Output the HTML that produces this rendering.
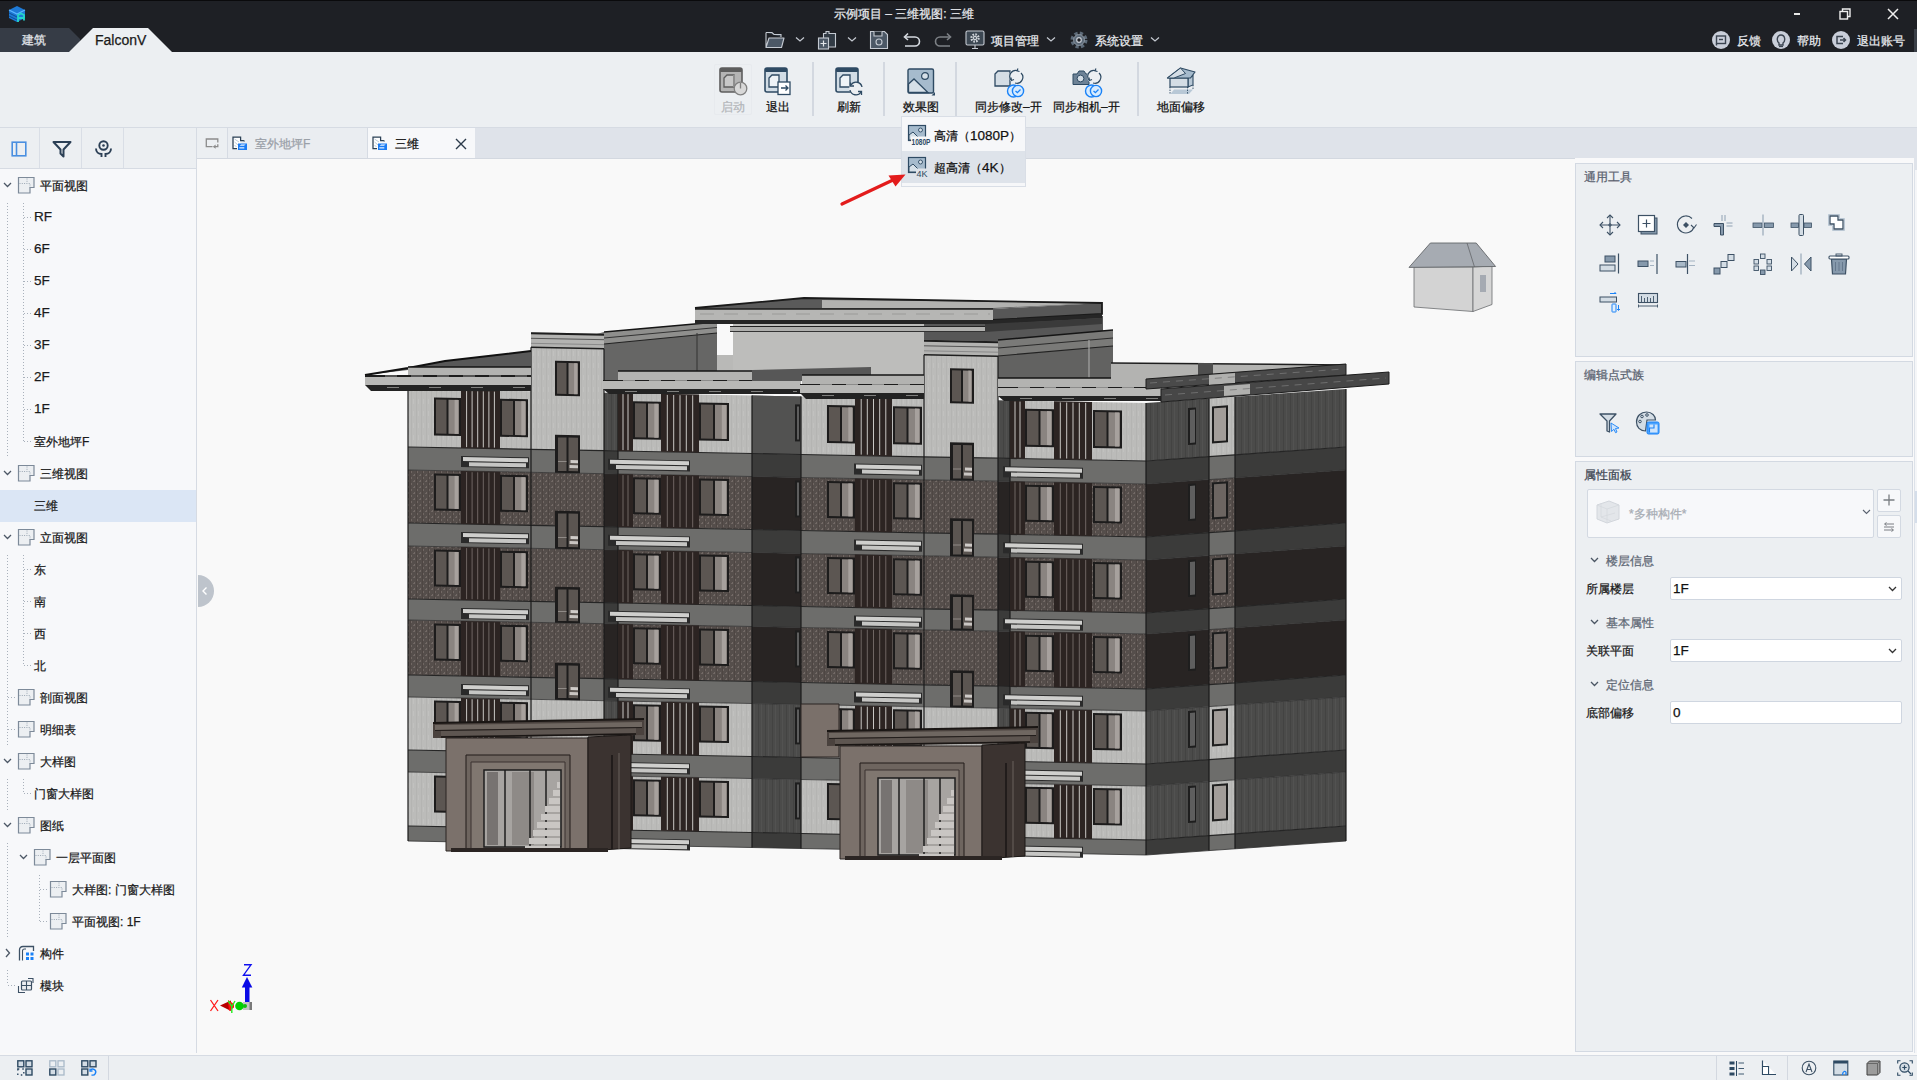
<!DOCTYPE html>
<html><head><meta charset="utf-8">
<style>
*{box-sizing:border-box;margin:0;padding:0}
html,body{width:1917px;height:1080px;overflow:hidden;background:#f9f9f9;font-family:"Liberation Sans",sans-serif;color:#1a1a1a}
.a{position:absolute}
.t{position:absolute;white-space:nowrap;line-height:1;-webkit-text-stroke-width:0.25px}
svg{position:absolute;overflow:visible}
</style></head><body>
<!-- title bar -->
<div class="a" style="left:0;top:0;width:1917px;height:52px;background:#1e2025"></div>
<div class="a" style="left:0;top:0;width:1917px;height:1px;background:#0a0a0c"></div>
<div class="t" style="left:834px;top:8px;font-size:12px;color:#e6e8ec">示例项目 – 三维视图: 三维</div>
<!-- logo -->
<svg style="left:8px;top:5px" width="18" height="18" viewBox="0 0 18 18">
<path d="M1 5 L9 1 L17 5 L17 13 L9 17 L1 13Z" fill="#1e7ad6"/>
<path d="M1 5 L9 9 L17 5" stroke="#5cb6ff" stroke-width="1.3" fill="none"/>
<path d="M1 8 L9 12 M1 11 L9 15" stroke="#0d4f96" stroke-width="1" fill="none"/>
<path d="M10 17 V10 L13 8.5 L16 10 V15.5 M10 13 H16" stroke="#24d6c8" stroke-width="1.8" fill="none"/>
</svg>
<!-- app tabs -->
<svg style="left:0;top:28px" width="180" height="24" viewBox="0 0 180 24">
<path d="M0 0 H69 L80 11 L80 24 H0Z" fill="#363c46"/>
<path d="M69 24 L93 0 H148 L172 24Z" fill="#eceff2"/>
</svg>
<div class="t" style="left:22px;top:33.5px;font-size:12px;color:#e0e3e8">建筑</div>
<div class="t" style="left:95px;top:33px;font-size:14px;color:#1a1a1a">FalconV</div>
<!-- title row 2 icons -->
<svg style="left:765px;top:31px" width="20" height="18" viewBox="0 0 20 18">
<path d="M1 1.5 H7 L9 3.5 H16 V6" fill="#3a434e" stroke="#c5cad2" stroke-width="1.1"/>
<path d="M1 1.5 V16.5 H16.5 L19 7 H4 L1 16.5" fill="#4c5866" stroke="#c5cad2" stroke-width="1.1" stroke-linejoin="round"/>
</svg>
<svg style="left:795px;top:36px" width="10" height="7" viewBox="0 0 10 7"><path d="M1 1.5 L5 5 L9 1.5" stroke="#c5cad2" stroke-width="1.2" fill="none"/></svg>
<svg style="left:818px;top:30px" width="20" height="20" viewBox="0 0 20 20">
<path d="M5.5 3.5 H8 V1.5 H11 V3.5 H17.5 V17 H5.5Z" fill="#323b45" stroke="#c5cad2" stroke-width="1.1"/>
<rect x="0.5" y="8" width="10" height="11" fill="#4c5866" stroke="#c5cad2" stroke-width="1.1"/>
<path d="M5.5 10.5 V16.5 M2.5 13.5 H8.5" stroke="#e3e6ea" stroke-width="1.2"/>
</svg>
<svg style="left:847px;top:36px" width="10" height="7" viewBox="0 0 10 7"><path d="M1 1.5 L5 5 L9 1.5" stroke="#c5cad2" stroke-width="1.2" fill="none"/></svg>
<svg style="left:869px;top:30px" width="20" height="20" viewBox="0 0 20 20">
<path d="M1.5 1.5 H15.5 L18.5 4.5 V18.5 H1.5Z" fill="#4c5866" stroke="#c5cad2" stroke-width="1.1"/>
<path d="M5 1.5 V6 H13 V1.5" fill="#2a323b" stroke="#c5cad2" stroke-width="1.1"/>
<circle cx="10" cy="12" r="3" fill="none" stroke="#c5cad2" stroke-width="1.1"/>
</svg>
<svg style="left:902px;top:32px" width="20" height="16" viewBox="0 0 20 16">
<path d="M3 5 H13 A4.5 4.5 0 0 1 13 14 H3" fill="none" stroke="#d5d9df" stroke-width="1.6"/>
<path d="M6 1.5 L2.5 5 L6 8" fill="none" stroke="#d5d9df" stroke-width="1.6"/>
</svg>
<svg style="left:933px;top:32px" width="20" height="16" viewBox="0 0 20 16">
<path d="M17 5 H7 A4.5 4.5 0 0 0 7 14 H17" fill="none" stroke="#7d8186" stroke-width="1.6"/>
<path d="M14 1.5 L17.5 5 L14 8" fill="none" stroke="#7d8186" stroke-width="1.6"/>
</svg>
<svg style="left:965px;top:30px" width="20" height="20" viewBox="0 0 20 20">
<rect x="1" y="1" width="18" height="14" rx="1.5" fill="#3d4853" stroke="#c5cad2" stroke-width="1.1"/>
<path d="M7 18.5 H13 M10 15 V18.5" stroke="#c5cad2" stroke-width="1.1"/>
<circle cx="10" cy="8" r="3.6" fill="none" stroke="#cfd3d9" stroke-width="2.2" stroke-dasharray="1.6 1.2"/>
<circle cx="10" cy="8" r="2.2" fill="#cfd3d9"/><circle cx="10" cy="8" r="1" fill="#3d4853"/>
</svg>
<div class="t" style="left:991px;top:34.5px;font-size:12px;color:#e8eaee">项目管理</div>
<svg style="left:1046px;top:36px" width="10" height="7" viewBox="0 0 10 7"><path d="M1 1.5 L5 5 L9 1.5" stroke="#c5cad2" stroke-width="1.2" fill="none"/></svg>
<svg style="left:1069px;top:30px" width="20" height="20" viewBox="0 0 20 20">
<circle cx="10" cy="10" r="6.5" fill="none" stroke="#5d6a78" stroke-width="4" stroke-dasharray="3 2.1"/>
<circle cx="10" cy="10" r="5.5" fill="#5d6a78" stroke="#aab2bc" stroke-width="0.6"/>
<circle cx="10" cy="10" r="2.3" fill="#1e2025" stroke="#c5cad2" stroke-width="1.2"/>
</svg>
<div class="t" style="left:1095px;top:34.5px;font-size:12px;color:#e8eaee">系统设置</div>
<svg style="left:1150px;top:36px" width="10" height="7" viewBox="0 0 10 7"><path d="M1 1.5 L5 5 L9 1.5" stroke="#c5cad2" stroke-width="1.2" fill="none"/></svg>
<!-- window controls -->
<div class="a" style="left:1794px;top:13px;width:6px;height:2px;background:#e8e8e8"></div>
<svg style="left:1839px;top:8px" width="12" height="12" viewBox="0 0 12 12">
<rect x="1" y="3.5" width="7.5" height="7.5" fill="none" stroke="#eee" stroke-width="1.4"/>
<path d="M3.5 3.5 V1 H11 V8.5 H8.5" fill="none" stroke="#eee" stroke-width="1.4"/>
</svg>
<svg style="left:1887px;top:8px" width="12" height="12" viewBox="0 0 12 12"><path d="M1 1 L11 11 M11 1 L1 11" stroke="#eee" stroke-width="1.5"/></svg>
<!-- feedback / help / logout -->
<svg style="left:1712px;top:31px" width="18" height="18" viewBox="0 0 18 18">
<circle cx="9" cy="9" r="9" fill="#c9ced9"/>
<rect x="4.5" y="5" width="9" height="7.5" fill="none" stroke="#3b4450" stroke-width="1.4"/>
<path d="M4.5 12.5 V14.5" stroke="#3b4450" stroke-width="1.4"/><path d="M7 8.5 H11" stroke="#3b4450" stroke-width="1.4"/>
</svg>
<div class="t" style="left:1737px;top:34.5px;font-size:12px;color:#e8eaee">反馈</div>
<svg style="left:1772px;top:31px" width="18" height="18" viewBox="0 0 18 18">
<circle cx="9" cy="9" r="9" fill="#c9ced9"/>
<path d="M7 14 V12 C4.5 10.5 4.5 4 9 4 C13.5 4 13.5 10.5 11 12 V14Z" fill="none" stroke="#3b4450" stroke-width="1.4"/>
<path d="M7 15.5 H11" stroke="#3b4450" stroke-width="1.2"/>
</svg>
<div class="t" style="left:1797px;top:34.5px;font-size:12px;color:#e8eaee">帮助</div>
<svg style="left:1832px;top:31px" width="18" height="18" viewBox="0 0 18 18">
<circle cx="9" cy="9" r="9" fill="#c9ced9"/>
<path d="M11 5.5 H5 V12.5 H11" fill="none" stroke="#3b4450" stroke-width="1.5"/>
<path d="M8 9 H13.5 M11.5 7 L13.5 9 L11.5 11" fill="none" stroke="#3b4450" stroke-width="1.5"/>
</svg>
<div class="t" style="left:1857px;top:34.5px;font-size:12px;color:#e8eaee">退出账号</div>
<div class="a" style="left:1914px;top:29px;width:3px;height:23px;background:#3a3f47"></div>
<!-- toolbar -->
<div class="a" style="left:0;top:52px;width:1917px;height:76px;background:#eceff2"></div>
<div class="a" style="left:0;top:127px;width:1917px;height:1px;background:#d6dbe3"></div>
<!-- 启动 (disabled) -->
<div class="a" style="left:714px;top:64px;width:38px;height:51px;border:1px solid #e7eaee;border-radius:2px"></div>
<svg style="left:719px;top:67px" width="30" height="30" viewBox="0 0 30 30">
<rect x="1" y="1" width="22" height="24" rx="2" fill="#b4b4b4" stroke="#5d5d5d" stroke-width="1.6"/>
<rect x="1" y="1" width="22" height="4" rx="1" fill="#5d5d5d"/>
<path d="M5 11 L8 8 H15 V20 H5Z" fill="#c8c8c8" stroke="#5d5d5d" stroke-width="1.3"/>
<path d="M15 8 V20" stroke="#8f8f8f" stroke-width="2"/>
<circle cx="21.5" cy="21.5" r="6.3" fill="#d8d8d8" stroke="#808080" stroke-width="1.3"/>
<path d="M21.5 16 V21.5" stroke="#808080" stroke-width="1.3"/>
</svg>
<div class="t" style="left:721px;top:100.5px;font-size:12px;color:#b3b6ba">启动</div>
<!-- 退出 -->
<svg style="left:764px;top:67px" width="30" height="30" viewBox="0 0 30 30">
<rect x="1" y="1" width="22" height="24" rx="2" fill="#d2dde6" stroke="#2e4a63" stroke-width="1.6"/>
<rect x="1" y="1" width="22" height="4" rx="1" fill="#2e4a63"/>
<path d="M5 11 L8 8 H15 V20 H5Z" fill="#eef3f7" stroke="#2e4a63" stroke-width="1.3"/>
<rect x="14" y="15" width="12" height="12.5" fill="#fff" stroke="#2e4a63" stroke-width="1.3"/>
<path d="M17 21 H24 M21.5 18.5 L24 21 L21.5 23.5" fill="none" stroke="#2e4a63" stroke-width="1.3"/>
</svg>
<div class="t" style="left:766px;top:100.5px;font-size:12px;color:#111">退出</div>
<div class="a" style="left:812px;top:62px;width:2px;height:54px;background:#d3d8e0"></div>
<!-- 刷新 -->
<svg style="left:835px;top:67px" width="30" height="30" viewBox="0 0 30 30">
<rect x="1" y="1" width="22" height="24" rx="2" fill="#d2dde6" stroke="#2e4a63" stroke-width="1.6"/>
<rect x="1" y="1" width="22" height="4" rx="1" fill="#2e4a63"/>
<path d="M5 11 L8 8 H15 V20 H5Z" fill="#eef3f7" stroke="#2e4a63" stroke-width="1.3"/>
<circle cx="21" cy="21.5" r="6.8" fill="#eceff2"/>
<path d="M16 18 A6 6 0 0 1 27 20 M26 25 A6 6 0 0 1 15 23" fill="none" stroke="#2e4a63" stroke-width="1.3"/>
<path d="M15.5 15.5 V19 H19 M26.5 28 V24.5 H23" fill="none" stroke="#2e4a63" stroke-width="1.3"/>
</svg>
<div class="t" style="left:837px;top:100.5px;font-size:12px;color:#111">刷新</div>
<div class="a" style="left:883px;top:62px;width:2px;height:54px;background:#d3d8e0"></div>
<!-- 效果图 -->
<svg style="left:907px;top:68px" width="30" height="30" viewBox="0 0 30 30">
<rect x="1" y="1" width="25.5" height="24" rx="1.5" fill="#a6bbcd" stroke="#2e4a63" stroke-width="1.4"/>
<path d="M1.5 16 L7 11 L21 24.5 H1.5Z" fill="#d6e0e8" stroke="#2e4a63" stroke-width="1.3"/>
<circle cx="18" cy="8" r="3.4" fill="#d6e0e8" stroke="#2e4a63" stroke-width="1.2"/>
<path d="M28 27.5 V24 L24.5 27.5Z" fill="#2e4a63"/>
</svg>
<div class="t" style="left:903px;top:100.5px;font-size:12px;color:#111">效果图</div>
<div class="a" style="left:955px;top:62px;width:2px;height:54px;background:#d3d8e0"></div>
<!-- 同步修改-开 -->
<svg style="left:994px;top:67px" width="32" height="30" viewBox="0 0 32 30">
<path d="M1 7 L4 4 H16 V19 H1Z" fill="#d4dde5" stroke="#2e4a63" stroke-width="1.3"/>
<circle cx="22" cy="9.5" r="7" fill="#eceff2"/>
<path d="M17 13 A6 6 0 0 1 23 3.5 M27 6 A6 6 0 0 1 21 16" fill="none" stroke="#2e4a63" stroke-width="1.2"/>
<path d="M24 1.5 L23 3.8 L25.5 4.5 M17 10.5 L17.5 13.5 L20 12.5" fill="none" stroke="#2e4a63" stroke-width="1.2"/>
<circle cx="19.5" cy="24" r="6" fill="#d6ebff" stroke="#1a82f7" stroke-width="1.4"/>
<circle cx="24" cy="24" r="5.6" fill="#d6ebff" stroke="#1a82f7" stroke-width="1.4"/>
<path d="M21.5 24 L23.4 25.6 L26.5 22.5" fill="none" stroke="#1a82f7" stroke-width="1.3"/>
</svg>
<div class="t" style="left:975px;top:100.5px;font-size:12px;color:#111">同步修改–开</div>
<!-- 同步相机-开 -->
<svg style="left:1072px;top:67px" width="32" height="30" viewBox="0 0 32 30">
<path d="M1 7 H5 L7 4 H12 L14 7 H17 V17.5 H1Z" fill="#6d8296" stroke="#2e4a63" stroke-width="1"/>
<circle cx="8.5" cy="11.5" r="3.4" fill="#d4dde5" stroke="#2e4a63" stroke-width="1"/>
<circle cx="22" cy="9.5" r="7" fill="#eceff2"/>
<path d="M17 13 A6 6 0 0 1 23 3.5 M27 6 A6 6 0 0 1 21 16" fill="none" stroke="#2e4a63" stroke-width="1.2"/>
<path d="M24 1.5 L23 3.8 L25.5 4.5 M17 10.5 L17.5 13.5 L20 12.5" fill="none" stroke="#2e4a63" stroke-width="1.2"/>
<circle cx="19.5" cy="24" r="6" fill="#d6ebff" stroke="#1a82f7" stroke-width="1.4"/>
<circle cx="24" cy="24" r="5.6" fill="#d6ebff" stroke="#1a82f7" stroke-width="1.4"/>
<path d="M21.5 24 L23.4 25.6 L26.5 22.5" fill="none" stroke="#1a82f7" stroke-width="1.3"/>
</svg>
<div class="t" style="left:1053px;top:100.5px;font-size:12px;color:#111">同步相机–开</div>
<div class="a" style="left:1137px;top:62px;width:2px;height:54px;background:#d3d8e0"></div>
<!-- 地面偏移 -->
<svg style="left:1166px;top:67px" width="30" height="30" viewBox="0 0 30 30">
<path d="M4.5 27 L8 22.5 H27 L23 27Z" fill="#b8c8d6"/>
<path d="M4 20 V27 M21.5 20 V27 M27 18 V23" stroke="#2e4a63" stroke-width="1" stroke-dasharray="1.3 1.3"/>
<path d="M22 11 L27 8.5 V18 L22 20Z" fill="#b8c8d6" stroke="#2e4a63" stroke-width="1.1"/>
<rect x="4" y="11" width="18" height="9" fill="#d4dde5" stroke="#2e4a63" stroke-width="1.2"/>
<path d="M1.5 11 L14.5 1 L29 5 L24.5 11Z" fill="#a6bbcd" stroke="#2e4a63" stroke-width="1.2" stroke-linejoin="round"/>
<path d="M1.5 11 L14.5 1 L19.5 6.5 L8 11Z" fill="#d4dde5" stroke="#2e4a63" stroke-width="1"/>
</svg>
<div class="t" style="left:1157px;top:100.5px;font-size:12px;color:#111">地面偏移</div>
<!-- left panel -->
<div class="a" style="left:0;top:128px;width:197px;height:925px;background:#f7f8fa"></div>
<div class="a" style="left:0;top:128px;width:196px;height:41px;background:#eceff2"></div>
<div class="a" style="left:0;top:168px;width:196px;height:1px;background:#d6dbe3"></div>
<div class="a" style="left:196px;top:128px;width:1px;height:925px;background:#d6dbe3"></div>
<div class="a" style="left:39px;top:128px;width:1px;height:40px;background:#d9dee6"></div>
<div class="a" style="left:81px;top:128px;width:1px;height:40px;background:#d9dee6"></div>
<div class="a" style="left:123px;top:128px;width:1px;height:40px;background:#d9dee6"></div>
<svg style="left:11px;top:141px" width="16" height="16" viewBox="0 0 16 16"><rect x="1.2" y="1.2" width="13.6" height="13.6" fill="none" stroke="#4a8fe0" stroke-width="1.6"/><path d="M5.5 1.5 V14.5" stroke="#4a8fe0" stroke-width="1.6"/></svg>
<svg style="left:52px;top:140px" width="20" height="18" viewBox="0 0 20 18"><path d="M1.5 2 H18.5 L11.5 9.5 V16.5 L8.5 13.5 V9.5Z" fill="none" stroke="#2b3f55" stroke-width="2" stroke-linejoin="round"/></svg>
<svg style="left:93px;top:139px" width="20" height="20" viewBox="0 0 20 20"><circle cx="10.5" cy="6.5" r="4.2" fill="none" stroke="#2b3f55" stroke-width="1.9"/><circle cx="10.5" cy="6.5" r="1.3" fill="#2b3f55"/><path d="M3 9.5 C3 13 5.5 15 8.5 15 V18 M18 9.5 C18 13 15.5 15 12.5 15 V18" fill="none" stroke="#2b3f55" stroke-width="1.9"/></svg>
<div class="a" style="left:0;top:490px;width:196px;height:32px;background:#dbe6f5"></div>
<svg style="left:3px;top:182px" width="9" height="6" viewBox="0 0 9 6"><path d="M1 1 L4.5 4.5 L8 1" fill="none" stroke="#4d5866" stroke-width="1.3"/></svg>
<svg style="left:18px;top:177px" width="17" height="17" viewBox="0 0 17 17"><path d="M0.5 0.5 H16 V10.5 H12 V16 H0.5Z" fill="#eceff2" stroke="#7d8a99" stroke-width="1.2"/><path d="M1.5 6.5 H12 V10.5 M9 1.5 V6" fill="none" stroke="#8794a3" stroke-width="0.8" stroke-dasharray="1 1.3"/></svg>
<div class="t" style="left:40px;top:180px;font-size:12px;color:#1a1a1a">平面视图</div>
<div class="a" style="left:24px;top:217px;width:9px;height:1px;background:repeating-linear-gradient(90deg,#a9b1bb 0 1px,transparent 1px 3px)"></div>
<div class="t" style="left:34px;top:210px;font-size:13.5px;color:#1a1a1a">RF</div>
<div class="a" style="left:24px;top:249px;width:9px;height:1px;background:repeating-linear-gradient(90deg,#a9b1bb 0 1px,transparent 1px 3px)"></div>
<div class="t" style="left:34px;top:242px;font-size:13.5px;color:#1a1a1a">6F</div>
<div class="a" style="left:24px;top:281px;width:9px;height:1px;background:repeating-linear-gradient(90deg,#a9b1bb 0 1px,transparent 1px 3px)"></div>
<div class="t" style="left:34px;top:274px;font-size:13.5px;color:#1a1a1a">5F</div>
<div class="a" style="left:24px;top:313px;width:9px;height:1px;background:repeating-linear-gradient(90deg,#a9b1bb 0 1px,transparent 1px 3px)"></div>
<div class="t" style="left:34px;top:306px;font-size:13.5px;color:#1a1a1a">4F</div>
<div class="a" style="left:24px;top:345px;width:9px;height:1px;background:repeating-linear-gradient(90deg,#a9b1bb 0 1px,transparent 1px 3px)"></div>
<div class="t" style="left:34px;top:338px;font-size:13.5px;color:#1a1a1a">3F</div>
<div class="a" style="left:24px;top:377px;width:9px;height:1px;background:repeating-linear-gradient(90deg,#a9b1bb 0 1px,transparent 1px 3px)"></div>
<div class="t" style="left:34px;top:370px;font-size:13.5px;color:#1a1a1a">2F</div>
<div class="a" style="left:24px;top:409px;width:9px;height:1px;background:repeating-linear-gradient(90deg,#a9b1bb 0 1px,transparent 1px 3px)"></div>
<div class="t" style="left:34px;top:402px;font-size:13.5px;color:#1a1a1a">1F</div>
<div class="a" style="left:24px;top:441px;width:9px;height:1px;background:repeating-linear-gradient(90deg,#a9b1bb 0 1px,transparent 1px 3px)"></div>
<div class="t" style="left:34px;top:436px;font-size:12px;color:#1a1a1a">室外地坪F</div>
<div class="a" style="left:7px;top:203px;width:1px;height:254px;background:repeating-linear-gradient(#a9b1bb 0 1px,transparent 1px 3px)"></div>
<div class="a" style="left:23px;top:203px;width:1px;height:239px;background:repeating-linear-gradient(#a9b1bb 0 1px,transparent 1px 3px)"></div>
<svg style="left:3px;top:470px" width="9" height="6" viewBox="0 0 9 6"><path d="M1 1 L4.5 4.5 L8 1" fill="none" stroke="#4d5866" stroke-width="1.3"/></svg>
<svg style="left:18px;top:465px" width="17" height="17" viewBox="0 0 17 17"><path d="M0.5 0.5 H16 V10.5 H12 V16 H0.5Z" fill="#eceff2" stroke="#7d8a99" stroke-width="1.2"/><path d="M1.5 6.5 H12 V10.5 M9 1.5 V6" fill="none" stroke="#8794a3" stroke-width="0.8" stroke-dasharray="1 1.3"/></svg>
<div class="t" style="left:40px;top:468px;font-size:12px;color:#1a1a1a">三维视图</div>
<div class="t" style="left:34px;top:500px;font-size:12px;color:#1a1a1a">三维</div>
<svg style="left:3px;top:534px" width="9" height="6" viewBox="0 0 9 6"><path d="M1 1 L4.5 4.5 L8 1" fill="none" stroke="#4d5866" stroke-width="1.3"/></svg>
<svg style="left:18px;top:529px" width="17" height="17" viewBox="0 0 17 17"><path d="M0.5 0.5 H16 V10.5 H12 V16 H0.5Z" fill="#eceff2" stroke="#7d8a99" stroke-width="1.2"/><path d="M1.5 6.5 H12 V10.5 M9 1.5 V6" fill="none" stroke="#8794a3" stroke-width="0.8" stroke-dasharray="1 1.3"/></svg>
<div class="t" style="left:40px;top:532px;font-size:12px;color:#1a1a1a">立面视图</div>
<div class="a" style="left:24px;top:569px;width:9px;height:1px;background:repeating-linear-gradient(90deg,#a9b1bb 0 1px,transparent 1px 3px)"></div>
<div class="t" style="left:34px;top:564px;font-size:12px;color:#1a1a1a">东</div>
<div class="a" style="left:24px;top:601px;width:9px;height:1px;background:repeating-linear-gradient(90deg,#a9b1bb 0 1px,transparent 1px 3px)"></div>
<div class="t" style="left:34px;top:596px;font-size:12px;color:#1a1a1a">南</div>
<div class="a" style="left:24px;top:633px;width:9px;height:1px;background:repeating-linear-gradient(90deg,#a9b1bb 0 1px,transparent 1px 3px)"></div>
<div class="t" style="left:34px;top:628px;font-size:12px;color:#1a1a1a">西</div>
<div class="a" style="left:24px;top:665px;width:9px;height:1px;background:repeating-linear-gradient(90deg,#a9b1bb 0 1px,transparent 1px 3px)"></div>
<div class="t" style="left:34px;top:660px;font-size:12px;color:#1a1a1a">北</div>
<div class="a" style="left:23px;top:555px;width:1px;height:111px;background:repeating-linear-gradient(#a9b1bb 0 1px,transparent 1px 3px)"></div>
<div class="a" style="left:7px;top:555px;width:1px;height:190px;background:repeating-linear-gradient(#a9b1bb 0 1px,transparent 1px 3px)"></div>
<div class="a" style="left:8px;top:697px;width:9px;height:1px;background:repeating-linear-gradient(90deg,#a9b1bb 0 1px,transparent 1px 3px)"></div>
<svg style="left:18px;top:689px" width="17" height="17" viewBox="0 0 17 17"><path d="M0.5 0.5 H16 V10.5 H12 V16 H0.5Z" fill="#eceff2" stroke="#7d8a99" stroke-width="1.2"/><path d="M1.5 6.5 H12 V10.5 M9 1.5 V6" fill="none" stroke="#8794a3" stroke-width="0.8" stroke-dasharray="1 1.3"/></svg>
<div class="t" style="left:40px;top:692px;font-size:12px;color:#1a1a1a">剖面视图</div>
<div class="a" style="left:8px;top:729px;width:9px;height:1px;background:repeating-linear-gradient(90deg,#a9b1bb 0 1px,transparent 1px 3px)"></div>
<svg style="left:18px;top:721px" width="17" height="17" viewBox="0 0 17 17"><path d="M0.5 0.5 H16 V10.5 H12 V16 H0.5Z" fill="#eceff2" stroke="#7d8a99" stroke-width="1.2"/><path d="M1.5 6.5 H12 V10.5 M9 1.5 V6" fill="none" stroke="#8794a3" stroke-width="0.8" stroke-dasharray="1 1.3"/></svg>
<div class="t" style="left:40px;top:724px;font-size:12px;color:#1a1a1a">明细表</div>
<svg style="left:3px;top:758px" width="9" height="6" viewBox="0 0 9 6"><path d="M1 1 L4.5 4.5 L8 1" fill="none" stroke="#4d5866" stroke-width="1.3"/></svg>
<svg style="left:18px;top:753px" width="17" height="17" viewBox="0 0 17 17"><path d="M0.5 0.5 H16 V10.5 H12 V16 H0.5Z" fill="#eceff2" stroke="#7d8a99" stroke-width="1.2"/><path d="M1.5 6.5 H12 V10.5 M9 1.5 V6" fill="none" stroke="#8794a3" stroke-width="0.8" stroke-dasharray="1 1.3"/></svg>
<div class="t" style="left:40px;top:756px;font-size:12px;color:#1a1a1a">大样图</div>
<div class="a" style="left:24px;top:793px;width:9px;height:1px;background:repeating-linear-gradient(90deg,#a9b1bb 0 1px,transparent 1px 3px)"></div>
<div class="t" style="left:34px;top:788px;font-size:12px;color:#1a1a1a">门窗大样图</div>
<div class="a" style="left:23px;top:779px;width:1px;height:15px;background:repeating-linear-gradient(#a9b1bb 0 1px,transparent 1px 3px)"></div>
<div class="a" style="left:7px;top:779px;width:1px;height:31px;background:repeating-linear-gradient(#a9b1bb 0 1px,transparent 1px 3px)"></div>
<svg style="left:3px;top:822px" width="9" height="6" viewBox="0 0 9 6"><path d="M1 1 L4.5 4.5 L8 1" fill="none" stroke="#4d5866" stroke-width="1.3"/></svg>
<svg style="left:18px;top:817px" width="17" height="17" viewBox="0 0 17 17"><path d="M0.5 0.5 H16 V10.5 H12 V16 H0.5Z" fill="#eceff2" stroke="#7d8a99" stroke-width="1.2"/><path d="M1.5 6.5 H12 V10.5 M9 1.5 V6" fill="none" stroke="#8794a3" stroke-width="0.8" stroke-dasharray="1 1.3"/></svg>
<div class="t" style="left:40px;top:820px;font-size:12px;color:#1a1a1a">图纸</div>
<svg style="left:19px;top:854px" width="9" height="6" viewBox="0 0 9 6"><path d="M1 1 L4.5 4.5 L8 1" fill="none" stroke="#4d5866" stroke-width="1.3"/></svg>
<svg style="left:34px;top:849px" width="17" height="17" viewBox="0 0 17 17"><path d="M0.5 0.5 H16 V10.5 H12 V16 H0.5Z" fill="#eceff2" stroke="#7d8a99" stroke-width="1.2"/><path d="M1.5 6.5 H12 V10.5 M9 1.5 V6" fill="none" stroke="#8794a3" stroke-width="0.8" stroke-dasharray="1 1.3"/></svg>
<div class="t" style="left:56px;top:852px;font-size:12px;color:#1a1a1a">一层平面图</div>
<div class="a" style="left:7px;top:843px;width:1px;height:95px;background:repeating-linear-gradient(#a9b1bb 0 1px,transparent 1px 3px)"></div>
<div class="a" style="left:40px;top:889px;width:9px;height:1px;background:repeating-linear-gradient(90deg,#a9b1bb 0 1px,transparent 1px 3px)"></div>
<svg style="left:50px;top:881px" width="17" height="17" viewBox="0 0 17 17"><path d="M0.5 0.5 H16 V10.5 H12 V16 H0.5Z" fill="#eceff2" stroke="#7d8a99" stroke-width="1.2"/><path d="M1.5 6.5 H12 V10.5 M9 1.5 V6" fill="none" stroke="#8794a3" stroke-width="0.8" stroke-dasharray="1 1.3"/></svg>
<div class="t" style="left:72px;top:884px;font-size:12px;color:#1a1a1a">大样图: 门窗大样图</div>
<div class="a" style="left:40px;top:921px;width:9px;height:1px;background:repeating-linear-gradient(90deg,#a9b1bb 0 1px,transparent 1px 3px)"></div>
<svg style="left:50px;top:913px" width="17" height="17" viewBox="0 0 17 17"><path d="M0.5 0.5 H16 V10.5 H12 V16 H0.5Z" fill="#eceff2" stroke="#7d8a99" stroke-width="1.2"/><path d="M1.5 6.5 H12 V10.5 M9 1.5 V6" fill="none" stroke="#8794a3" stroke-width="0.8" stroke-dasharray="1 1.3"/></svg>
<div class="t" style="left:72px;top:916px;font-size:12px;color:#1a1a1a">平面视图: 1F</div>
<div class="a" style="left:39px;top:875px;width:1px;height:47px;background:repeating-linear-gradient(#a9b1bb 0 1px,transparent 1px 3px)"></div>
<svg style="left:5px;top:948px" width="6" height="10" viewBox="0 0 6 10"><path d="M1 1 L4.5 5 L1 9" fill="none" stroke="#4d5866" stroke-width="1.3"/></svg>
<svg style="left:18px;top:945px" width="17" height="17" viewBox="0 0 17 17"><path d="M1.5 15.5 V5 Q1.5 1.5 5 1.5 H15.5 V6" fill="none" stroke="#3d5165" stroke-width="1.3"/><path d="M4.5 15.5 V6 Q4.5 4 6.5 4 H8" fill="none" stroke="#3d5165" stroke-width="1.1"/><rect x="8" y="7.5" width="3" height="3" fill="#1a82f7"/><rect x="12.5" y="7.5" width="3" height="3" fill="#1a82f7"/><rect x="8" y="12" width="3" height="3" fill="#1a82f7"/><rect x="12.5" y="12" width="3" height="3" fill="#1a82f7"/></svg>
<div class="t" style="left:40px;top:948px;font-size:12px;color:#1a1a1a">构件</div>
<div class="a" style="left:7px;top:970px;width:1px;height:15px;background:repeating-linear-gradient(#a9b1bb 0 1px,transparent 1px 3px)"></div>
<div class="a" style="left:8px;top:985px;width:8px;height:1px;background:repeating-linear-gradient(90deg,#a9b1bb 0 1px,transparent 1px 3px)"></div>
<svg style="left:17px;top:977px" width="17" height="17" viewBox="0 0 17 17"><rect x="4.5" y="4" width="10" height="9" rx="1" fill="#eceff2" stroke="#3d5165" stroke-width="1.2"/><path d="M9.5 4 V13 M4.5 8.5 H14.5" stroke="#3d5165" stroke-width="1.1"/><path d="M1.5 9 V15.5 H8" fill="none" stroke="#3d5165" stroke-width="1.1"/><path d="M11 1.5 H16 V6" fill="none" stroke="#3d5165" stroke-width="1.1"/></svg>
<div class="t" style="left:40px;top:980px;font-size:12px;color:#1a1a1a">模块</div><!-- doc tabs -->
<div class="a" style="left:197px;top:128px;width:1720px;height:30px;background:#dfe3ea"></div>
<div class="a" style="left:197px;top:158px;width:1720px;height:1px;background:#d3d8e0"></div>
<div class="a" style="left:197px;top:128px;width:31px;height:30px;background:#eceff2;border-right:1px solid #d6dbe3"></div>
<svg style="left:205px;top:137px" width="16" height="14" viewBox="0 0 16 14"><path d="M12.8 5.5 V2 H1.3 V9.7 H7.5" fill="none" stroke="#8c8c8c" stroke-width="1.3"/><path d="M12.8 7.2 V9.7 H9.5" fill="none" stroke="#8c8c8c" stroke-width="1.3"/><path d="M7.8 9.7 L10.6 7.6 V11.8Z" fill="#8c8c8c"/></svg>
<div class="a" style="left:228px;top:128px;width:140px;height:30px;background:#eaedf1;border-right:1px solid #d6dbe3"></div>
<svg style="left:231px;top:135px" width="17" height="16" viewBox="0 0 17 16"><rect x="2.5" y="2.5" width="7" height="11" fill="#fff"/><path d="M3.5 4 L8 7 M3.5 7 L7 10 M3.5 10 L5.5 12" stroke="#b3c4d2" stroke-width="0.9"/><path d="M6 13.6 H2 V2 H9.6 V5.6 H12.4 Q13.3 5.6 13.3 6.6" fill="none" stroke="#2b4055" stroke-width="1.25"/><rect x="7" y="8.5" width="9" height="6.5" fill="#1a7cf5"/><path d="M8.5 10.8 L10.2 9.6 H14.6 L13 10.8Z" fill="#eaf4ff"/><rect x="8.3" y="12.2" width="5" height="1.3" fill="#d6eaff"/></svg>
<div class="t" style="left:255px;top:137.5px;font-size:12px;color:#9aa0a8">室外地坪F</div>
<div class="a" style="left:368px;top:128px;width:107px;height:30px;background:#f7f8fa"></div>
<svg style="left:371px;top:135px" width="17" height="16" viewBox="0 0 17 16"><rect x="2.5" y="2.5" width="7" height="11" fill="#fff"/><path d="M3.5 4 L8 7 M3.5 7 L7 10 M3.5 10 L5.5 12" stroke="#b3c4d2" stroke-width="0.9"/><path d="M6 13.6 H2 V2 H9.6 V5.6 H12.4 Q13.3 5.6 13.3 6.6" fill="none" stroke="#2b4055" stroke-width="1.25"/><rect x="7" y="8.5" width="9" height="6.5" fill="#1a7cf5"/><path d="M8.5 10.8 L10.2 9.6 H14.6 L13 10.8Z" fill="#eaf4ff"/><rect x="8.3" y="12.2" width="5" height="1.3" fill="#d6eaff"/></svg>
<div class="t" style="left:395px;top:137.5px;font-size:12px;color:#111">三维</div>
<svg style="left:455px;top:138px" width="12" height="12" viewBox="0 0 12 12"><path d="M1 1 L11 11 M11 1 L1 11" stroke="#2b3a4a" stroke-width="1.4"/></svg>
<!-- viewport -->
<div class="a" style="left:197px;top:159px;width:1378px;height:896px;background:#f9f9f9"></div>
<!-- collapse handle -->
<div class="a" style="left:198px;top:575px;width:16px;height:32px;background:#bec4cc;border-radius:0 16px 16px 0"></div>
<svg style="left:201px;top:586px" width="8" height="10" viewBox="0 0 8 10"><path d="M5.5 1.5 L2 5 L5.5 8.5" fill="none" stroke="#fff" stroke-width="1.4"/></svg>
<svg style="left:0;top:0" width="1917" height="1080" viewBox="0 0 1917 1080">
<defs><pattern id="pb" width="6" height="6" patternUnits="userSpaceOnUse"><rect width="6" height="6" fill="#554e4b"/><rect x="0" y="0" width="1" height="2" fill="#736a66"/><rect x="3" y="3" width="1" height="2" fill="#706763"/><rect x="2" y="0" width="1" height="6" fill="#4e4643"/><rect x="5" y="1" width="1" height="1" fill="#6e6562"/></pattern><pattern id="pl" width="5" height="12" patternUnits="userSpaceOnUse"><rect width="5" height="12" fill="#bbbbb9"/><rect x="1" width="1" height="12" fill="#b4b4b2"/><rect x="3" y="3" width="1" height="5" fill="#c1c1bf"/></pattern><pattern id="ps" width="7" height="10" patternUnits="userSpaceOnUse"><rect width="7" height="10" fill="#4b4b4a"/><rect x="2" width="1" height="10" fill="#434342"/><rect x="5" width="1" height="10" fill="#525251"/></pattern></defs>
<g shape-rendering="geometricPrecision">
<polygon points="531,352 604,332 717,322 717,383 531,383" fill="#666665"/>
<polygon points="604,332 717,322 717,333 604,344" fill="#8f8f8d"/>
<polyline points="604,332 717,322" stroke="#151515" stroke-width="1.6"/>
<polyline points="604,338 717,327.5" stroke="#333" stroke-width="1"/>
<polyline points="604,344 717,333" stroke="#222" stroke-width="1.2"/>
<line x1="697" y1="333" x2="697" y2="372" stroke="#333" stroke-width="1"/>
<polygon points="455,362 531,352 531,368 455,370" fill="#6a6a6a"/>
<polygon points="717,323 733,323 733,372 717,372" fill="#f9f9f9"/>
<polygon points="717,355 733,355 733,372 717,372" fill="#b9b9b7"/>
<polygon points="733,324 924,324 924,380 733,380" fill="#bdbdbb"/>
<polygon points="924,316 1103,316 1103,380 924,380" fill="#575757"/>
<polygon points="1085,333 1090,333 1090,380 1085,380" fill="#9a9a9a"/>
<polygon points="695,308 804,298 1102,303 993,309 695,309" fill="#5a5a5a"/>
<polygon points="822,300 1102,303 993,308 822,308" fill="#b2b2b0"/>
<polygon points="695,309 993,309 993,320 695,320" fill="#b6b6b4"/>
<polygon points="993,309 1102,303 1102,314 993,320" fill="#575757"/>
<polyline points="695,308 804,298 1102,303 1102,314 993,320" fill="none" stroke="#1a1a1a" stroke-width="1.8"/>
<line x1="695" y1="309" x2="993" y2="309" stroke="#1e1e1e" stroke-width="1.5"/>
<line x1="700" y1="314" x2="990" y2="314" stroke="#9a9a98" stroke-width="1" stroke-dasharray="14 10"/>
<polygon points="695,320 993,320 1102,314 1102,318 1000,324 695,324" fill="#262626"/>
<polygon points="730,327 985,327 985,331 730,331" fill="#b0b0ae"/>
<line x1="730" y1="326.5" x2="985" y2="326.5" stroke="#222" stroke-width="1"/>
<line x1="730" y1="331.5" x2="985" y2="331.5" stroke="#333" stroke-width="1"/>
<polygon points="985,324 1102,318 1102,324 985,332" fill="#3a3a3a"/>
<polygon points="998,340 1113,332 1113,380 998,380" fill="#626261"/>
<polygon points="998,340 1113,330 1113,346 998,356" fill="#7a7a78"/>
<polyline points="998,340 1113,330" stroke="#151515" stroke-width="1.6"/>
<polyline points="998,348 1113,338" stroke="#2a2a2a" stroke-width="1"/>
<polyline points="998,356 1113,346" stroke="#222" stroke-width="1.2"/>
<line x1="1089" y1="340" x2="1089" y2="378" stroke="#a5a5a3" stroke-width="1.2"/>
<polygon points="408,389 531,391.3 531,449.3 408,447" fill="url(#pl)"/>
<polygon points="408,447 531,449.3 531,472.3 408,470" fill="#6d6d6b"/>
<polygon points="408,470 531,472.3 531,525.3 408,523" fill="url(#pb)"/>
<polygon points="408,523 531,525.3 531,548.3 408,546" fill="#6d6d6b"/>
<polygon points="408,546 531,548.3 531,601.3 408,599" fill="url(#pb)"/>
<polygon points="408,599 531,601.3 531,622.3 408,620" fill="#6d6d6b"/>
<polygon points="408,620 531,622.3 531,677.3 408,675" fill="url(#pb)"/>
<polygon points="408,675 531,677.3 531,699.3 408,697" fill="#6d6d6b"/>
<polygon points="408,697 531,699.3 531,752.3 408,750" fill="url(#pl)"/>
<polygon points="408,750 531,752.3 531,774.3 408,772" fill="#6d6d6b"/>
<polygon points="408,772 531,774.3 531,828.3 408,826" fill="url(#pl)"/>
<polygon points="408,826 531,828.3 531,843.3 408,841" fill="#6d6d6b"/>
<polygon points="531,347.3 604,348.7 604,450.7 531,449.3" fill="url(#pl)"/>
<polygon points="531,449.3 604,450.7 604,473.7 531,472.3" fill="#6d6d6b"/>
<polygon points="531,472.3 604,473.7 604,526.7 531,525.3" fill="url(#pb)"/>
<polygon points="531,525.3 604,526.7 604,549.7 531,548.3" fill="#6d6d6b"/>
<polygon points="531,548.3 604,549.7 604,602.7 531,601.3" fill="url(#pb)"/>
<polygon points="531,601.3 604,602.7 604,623.7 531,622.3" fill="#6d6d6b"/>
<polygon points="531,622.3 604,623.7 604,678.7 531,677.3" fill="url(#pb)"/>
<polygon points="531,677.3 604,678.7 604,700.7 531,699.3" fill="#6d6d6b"/>
<polygon points="531,699.3 604,700.7 604,753.7 531,752.3" fill="url(#pl)"/>
<polygon points="531,752.3 604,753.7 604,775.7 531,774.3" fill="#6d6d6b"/>
<polygon points="531,774.3 604,775.7 604,829.7 531,828.3" fill="url(#pl)"/>
<polygon points="531,828.3 604,829.7 604,844.7 531,843.3" fill="#6d6d6b"/>
<polygon points="604,392.7 618,393 618,451 604,450.7" fill="url(#ps)"/>
<polygon points="604,450.7 618,451 618,474 604,473.7" fill="#3b3b3a"/>
<polygon points="604,473.7 618,474 618,527 604,526.7" fill="#282423"/>
<polygon points="604,526.7 618,527 618,550 604,549.7" fill="#3b3b3a"/>
<polygon points="604,549.7 618,550 618,603 604,602.7" fill="#282423"/>
<polygon points="604,602.7 618,603 618,624 604,623.7" fill="#3b3b3a"/>
<polygon points="604,623.7 618,624 618,679 604,678.7" fill="#282423"/>
<polygon points="604,678.7 618,679 618,701 604,700.7" fill="#3b3b3a"/>
<polygon points="604,700.7 618,701 618,754 604,753.7" fill="url(#ps)"/>
<polygon points="604,753.7 618,754 618,776 604,775.7" fill="#3b3b3a"/>
<polygon points="604,775.7 618,776 618,830 604,829.7" fill="url(#ps)"/>
<polygon points="604,829.7 618,830 618,845 604,844.7" fill="#3b3b3a"/>
<polygon points="618,393 752,395.5 752,453.5 618,451" fill="url(#pl)"/>
<polygon points="618,451 752,453.5 752,476.5 618,474" fill="#6d6d6b"/>
<polygon points="618,474 752,476.5 752,529.5 618,527" fill="url(#pb)"/>
<polygon points="618,527 752,529.5 752,552.5 618,550" fill="#6d6d6b"/>
<polygon points="618,550 752,552.5 752,605.5 618,603" fill="url(#pb)"/>
<polygon points="618,603 752,605.5 752,626.5 618,624" fill="#6d6d6b"/>
<polygon points="618,624 752,626.5 752,681.5 618,679" fill="url(#pb)"/>
<polygon points="618,679 752,681.5 752,703.5 618,701" fill="#6d6d6b"/>
<polygon points="618,701 752,703.5 752,756.5 618,754" fill="url(#pl)"/>
<polygon points="618,754 752,756.5 752,778.5 618,776" fill="#6d6d6b"/>
<polygon points="618,776 752,778.5 752,832.5 618,830" fill="url(#pl)"/>
<polygon points="618,830 752,832.5 752,847.5 618,845" fill="#6d6d6b"/>
<polygon points="752,395.5 801,396.5 801,454.5 752,453.5" fill="url(#ps)"/>
<polygon points="752,453.5 801,454.5 801,477.5 752,476.5" fill="#3b3b3a"/>
<polygon points="752,476.5 801,477.5 801,530.5 752,529.5" fill="#282423"/>
<polygon points="752,529.5 801,530.5 801,553.5 752,552.5" fill="#3b3b3a"/>
<polygon points="752,552.5 801,553.5 801,606.5 752,605.5" fill="#282423"/>
<polygon points="752,605.5 801,606.5 801,627.5 752,626.5" fill="#3b3b3a"/>
<polygon points="752,626.5 801,627.5 801,682.5 752,681.5" fill="#282423"/>
<polygon points="752,681.5 801,682.5 801,704.5 752,703.5" fill="#3b3b3a"/>
<polygon points="752,703.5 801,704.5 801,757.5 752,756.5" fill="url(#ps)"/>
<polygon points="752,756.5 801,757.5 801,779.5 752,778.5" fill="#3b3b3a"/>
<polygon points="752,778.5 801,779.5 801,833.5 752,832.5" fill="url(#ps)"/>
<polygon points="752,832.5 801,833.5 801,848.5 752,847.5" fill="#3b3b3a"/>
<polygon points="801,396.5 924,398.8 924,456.8 801,454.5" fill="url(#pl)"/>
<polygon points="801,454.5 924,456.8 924,479.8 801,477.5" fill="#6d6d6b"/>
<polygon points="801,477.5 924,479.8 924,532.8 801,530.5" fill="url(#pb)"/>
<polygon points="801,530.5 924,532.8 924,555.8 801,553.5" fill="#6d6d6b"/>
<polygon points="801,553.5 924,555.8 924,608.8 801,606.5" fill="url(#pb)"/>
<polygon points="801,606.5 924,608.8 924,629.8 801,627.5" fill="#6d6d6b"/>
<polygon points="801,627.5 924,629.8 924,684.8 801,682.5" fill="url(#pb)"/>
<polygon points="801,682.5 924,684.8 924,706.8 801,704.5" fill="#6d6d6b"/>
<polygon points="801,704.5 924,706.8 924,759.8 801,757.5" fill="url(#pl)"/>
<polygon points="801,757.5 924,759.8 924,781.8 801,779.5" fill="#6d6d6b"/>
<polygon points="801,779.5 924,781.8 924,835.8 801,833.5" fill="url(#pl)"/>
<polygon points="801,833.5 924,835.8 924,850.8 801,848.5" fill="#6d6d6b"/>
<polygon points="924,354.8 998,356.2 998,458.2 924,456.8" fill="url(#pl)"/>
<polygon points="924,456.8 998,458.2 998,481.2 924,479.8" fill="#6d6d6b"/>
<polygon points="924,479.8 998,481.2 998,534.2 924,532.8" fill="url(#pb)"/>
<polygon points="924,532.8 998,534.2 998,557.2 924,555.8" fill="#6d6d6b"/>
<polygon points="924,555.8 998,557.2 998,610.2 924,608.8" fill="url(#pb)"/>
<polygon points="924,608.8 998,610.2 998,631.2 924,629.8" fill="#6d6d6b"/>
<polygon points="924,629.8 998,631.2 998,686.2 924,684.8" fill="url(#pb)"/>
<polygon points="924,684.8 998,686.2 998,708.2 924,706.8" fill="#6d6d6b"/>
<polygon points="924,706.8 998,708.2 998,761.2 924,759.8" fill="url(#pl)"/>
<polygon points="924,759.8 998,761.2 998,783.2 924,781.8" fill="#6d6d6b"/>
<polygon points="924,781.8 998,783.2 998,837.2 924,835.8" fill="url(#pl)"/>
<polygon points="924,835.8 998,837.2 998,852.2 924,850.8" fill="#6d6d6b"/>
<polygon points="998,400.2 1010,400.4 1010,458.4 998,458.2" fill="url(#ps)"/>
<polygon points="998,458.2 1010,458.4 1010,481.4 998,481.2" fill="#3b3b3a"/>
<polygon points="998,481.2 1010,481.4 1010,534.4 998,534.2" fill="#282423"/>
<polygon points="998,534.2 1010,534.4 1010,557.4 998,557.2" fill="#3b3b3a"/>
<polygon points="998,557.2 1010,557.4 1010,610.4 998,610.2" fill="#282423"/>
<polygon points="998,610.2 1010,610.4 1010,631.4 998,631.2" fill="#3b3b3a"/>
<polygon points="998,631.2 1010,631.4 1010,686.4 998,686.2" fill="#282423"/>
<polygon points="998,686.2 1010,686.4 1010,708.4 998,708.2" fill="#3b3b3a"/>
<polygon points="998,708.2 1010,708.4 1010,761.4 998,761.2" fill="url(#ps)"/>
<polygon points="998,761.2 1010,761.4 1010,783.4 998,783.2" fill="#3b3b3a"/>
<polygon points="998,783.2 1010,783.4 1010,837.4 998,837.2" fill="url(#ps)"/>
<polygon points="998,837.2 1010,837.4 1010,852.4 998,852.2" fill="#3b3b3a"/>
<polygon points="1010,400.4 1146,403 1146,461 1010,458.4" fill="url(#pl)"/>
<polygon points="1010,458.4 1146,461 1146,484 1010,481.4" fill="#6d6d6b"/>
<polygon points="1010,481.4 1146,484 1146,537 1010,534.4" fill="url(#pb)"/>
<polygon points="1010,534.4 1146,537 1146,560 1010,557.4" fill="#6d6d6b"/>
<polygon points="1010,557.4 1146,560 1146,613 1010,610.4" fill="url(#pb)"/>
<polygon points="1010,610.4 1146,613 1146,634 1010,631.4" fill="#6d6d6b"/>
<polygon points="1010,631.4 1146,634 1146,689 1010,686.4" fill="url(#pb)"/>
<polygon points="1010,686.4 1146,689 1146,711 1010,708.4" fill="#6d6d6b"/>
<polygon points="1010,708.4 1146,711 1146,764 1010,761.4" fill="url(#pl)"/>
<polygon points="1010,761.4 1146,764 1146,786 1010,783.4" fill="#6d6d6b"/>
<polygon points="1010,783.4 1146,786 1146,840 1010,837.4" fill="url(#pl)"/>
<polygon points="1010,837.4 1146,840 1146,855 1010,852.4" fill="#6d6d6b"/>
<polygon points="1146,403 1209,398.6 1209,456.6 1146,461" fill="url(#ps)"/>
<polygon points="1146,461 1209,456.6 1209,479.6 1146,484" fill="#3b3b3a"/>
<polygon points="1146,484 1209,479.6 1209,532.6 1146,537" fill="#282423"/>
<polygon points="1146,537 1209,532.6 1209,555.6 1146,560" fill="#3b3b3a"/>
<polygon points="1146,560 1209,555.6 1209,608.6 1146,613" fill="#282423"/>
<polygon points="1146,613 1209,608.6 1209,629.6 1146,634" fill="#3b3b3a"/>
<polygon points="1146,634 1209,629.6 1209,684.6 1146,689" fill="#282423"/>
<polygon points="1146,689 1209,684.6 1209,706.6 1146,711" fill="#3b3b3a"/>
<polygon points="1146,711 1209,706.6 1209,759.6 1146,764" fill="url(#ps)"/>
<polygon points="1146,764 1209,759.6 1209,781.6 1146,786" fill="#3b3b3a"/>
<polygon points="1146,786 1209,781.6 1209,835.6 1146,840" fill="url(#ps)"/>
<polygon points="1146,840 1209,835.6 1209,850.6 1146,855" fill="#3b3b3a"/>
<polygon points="1209,398.6 1235,396.8 1235,454.8 1209,456.6" fill="url(#pl)"/>
<polygon points="1209,456.6 1235,454.8 1235,477.8 1209,479.6" fill="#6d6d6b"/>
<polygon points="1209,479.6 1235,477.8 1235,530.8 1209,532.6" fill="url(#pb)"/>
<polygon points="1209,532.6 1235,530.8 1235,553.8 1209,555.6" fill="#6d6d6b"/>
<polygon points="1209,555.6 1235,553.8 1235,606.8 1209,608.6" fill="url(#pb)"/>
<polygon points="1209,608.6 1235,606.8 1235,627.8 1209,629.6" fill="#6d6d6b"/>
<polygon points="1209,629.6 1235,627.8 1235,682.8 1209,684.6" fill="url(#pb)"/>
<polygon points="1209,684.6 1235,682.8 1235,704.8 1209,706.6" fill="#6d6d6b"/>
<polygon points="1209,706.6 1235,704.8 1235,757.8 1209,759.6" fill="url(#pl)"/>
<polygon points="1209,759.6 1235,757.8 1235,779.8 1209,781.6" fill="#6d6d6b"/>
<polygon points="1209,781.6 1235,779.8 1235,833.8 1209,835.6" fill="url(#pl)"/>
<polygon points="1209,835.6 1235,833.8 1235,848.8 1209,850.6" fill="#6d6d6b"/>
<polygon points="1235,396.8 1346,389 1346,447 1235,454.8" fill="url(#ps)"/>
<polygon points="1235,454.8 1346,447 1346,470 1235,477.8" fill="#3b3b3a"/>
<polygon points="1235,477.8 1346,470 1346,523 1235,530.8" fill="#282423"/>
<polygon points="1235,530.8 1346,523 1346,546 1235,553.8" fill="#3b3b3a"/>
<polygon points="1235,553.8 1346,546 1346,599 1235,606.8" fill="#282423"/>
<polygon points="1235,606.8 1346,599 1346,620 1235,627.8" fill="#3b3b3a"/>
<polygon points="1235,627.8 1346,620 1346,675 1235,682.8" fill="#282423"/>
<polygon points="1235,682.8 1346,675 1346,697 1235,704.8" fill="#3b3b3a"/>
<polygon points="1235,704.8 1346,697 1346,750 1235,757.8" fill="url(#ps)"/>
<polygon points="1235,757.8 1346,750 1346,772 1235,779.8" fill="#3b3b3a"/>
<polygon points="1235,779.8 1346,772 1346,826 1235,833.8" fill="url(#ps)"/>
<polygon points="1235,833.8 1346,826 1346,841 1235,848.8" fill="#3b3b3a"/>
<polygon points="752,395.5 801,396.5 801,454.5 752,453.5" fill="#525251"/>
<polygon points="531,332.3 604,333.7 604,348.7 531,347.3" fill="#b3b3b1"/>
<line x1="531" y1="333.3" x2="604" y2="334.7" stroke="#1e1e1e" stroke-width="2"/>
<line x1="531" y1="338.3" x2="604" y2="339.7" stroke="#555" stroke-width="1"/>
<line x1="531" y1="343.3" x2="604" y2="344.7" stroke="#8a8a8a" stroke-width="1"/>
<line x1="531" y1="347.3" x2="604" y2="348.7" stroke="#1e1e1e" stroke-width="1.5"/>
<polygon points="924,339.8 998,341.2 998,356.2 924,354.8" fill="#b3b3b1"/>
<line x1="924" y1="340.8" x2="998" y2="342.2" stroke="#1e1e1e" stroke-width="2"/>
<line x1="924" y1="345.8" x2="998" y2="347.2" stroke="#555" stroke-width="1"/>
<line x1="924" y1="350.8" x2="998" y2="352.2" stroke="#8a8a8a" stroke-width="1"/>
<line x1="924" y1="354.8" x2="998" y2="356.2" stroke="#1e1e1e" stroke-width="1.5"/>
<line x1="408" y1="447" x2="531" y2="449.3" stroke="#252525" stroke-width="1.2"/>
<line x1="408" y1="470" x2="531" y2="472.3" stroke="#2e2e2e" stroke-width="0.8"/>
<line x1="408" y1="523" x2="531" y2="525.3" stroke="#252525" stroke-width="1.2"/>
<line x1="408" y1="546" x2="531" y2="548.3" stroke="#2e2e2e" stroke-width="0.8"/>
<line x1="408" y1="599" x2="531" y2="601.3" stroke="#252525" stroke-width="1.2"/>
<line x1="408" y1="620" x2="531" y2="622.3" stroke="#2e2e2e" stroke-width="0.8"/>
<line x1="408" y1="675" x2="531" y2="677.3" stroke="#252525" stroke-width="1.2"/>
<line x1="408" y1="697" x2="531" y2="699.3" stroke="#2e2e2e" stroke-width="0.8"/>
<line x1="408" y1="750" x2="531" y2="752.3" stroke="#252525" stroke-width="1.2"/>
<line x1="408" y1="772" x2="531" y2="774.3" stroke="#2e2e2e" stroke-width="0.8"/>
<line x1="408" y1="826" x2="531" y2="828.3" stroke="#252525" stroke-width="1.2"/>
<line x1="408" y1="841" x2="531" y2="843.3" stroke="#2e2e2e" stroke-width="0.8"/>
<line x1="531" y1="449.3" x2="604" y2="450.7" stroke="#252525" stroke-width="1.2"/>
<line x1="531" y1="472.3" x2="604" y2="473.7" stroke="#2e2e2e" stroke-width="0.8"/>
<line x1="531" y1="525.3" x2="604" y2="526.7" stroke="#252525" stroke-width="1.2"/>
<line x1="531" y1="548.3" x2="604" y2="549.7" stroke="#2e2e2e" stroke-width="0.8"/>
<line x1="531" y1="601.3" x2="604" y2="602.7" stroke="#252525" stroke-width="1.2"/>
<line x1="531" y1="622.3" x2="604" y2="623.7" stroke="#2e2e2e" stroke-width="0.8"/>
<line x1="531" y1="677.3" x2="604" y2="678.7" stroke="#252525" stroke-width="1.2"/>
<line x1="531" y1="699.3" x2="604" y2="700.7" stroke="#2e2e2e" stroke-width="0.8"/>
<line x1="531" y1="752.3" x2="604" y2="753.7" stroke="#252525" stroke-width="1.2"/>
<line x1="531" y1="774.3" x2="604" y2="775.7" stroke="#2e2e2e" stroke-width="0.8"/>
<line x1="531" y1="828.3" x2="604" y2="829.7" stroke="#252525" stroke-width="1.2"/>
<line x1="531" y1="843.3" x2="604" y2="844.7" stroke="#2e2e2e" stroke-width="0.8"/>
<line x1="604" y1="450.7" x2="618" y2="451" stroke="#252525" stroke-width="1.2"/>
<line x1="604" y1="473.7" x2="618" y2="474" stroke="#2e2e2e" stroke-width="0.8"/>
<line x1="604" y1="526.7" x2="618" y2="527" stroke="#252525" stroke-width="1.2"/>
<line x1="604" y1="549.7" x2="618" y2="550" stroke="#2e2e2e" stroke-width="0.8"/>
<line x1="604" y1="602.7" x2="618" y2="603" stroke="#252525" stroke-width="1.2"/>
<line x1="604" y1="623.7" x2="618" y2="624" stroke="#2e2e2e" stroke-width="0.8"/>
<line x1="604" y1="678.7" x2="618" y2="679" stroke="#252525" stroke-width="1.2"/>
<line x1="604" y1="700.7" x2="618" y2="701" stroke="#2e2e2e" stroke-width="0.8"/>
<line x1="604" y1="753.7" x2="618" y2="754" stroke="#252525" stroke-width="1.2"/>
<line x1="604" y1="775.7" x2="618" y2="776" stroke="#2e2e2e" stroke-width="0.8"/>
<line x1="604" y1="829.7" x2="618" y2="830" stroke="#252525" stroke-width="1.2"/>
<line x1="604" y1="844.7" x2="618" y2="845" stroke="#2e2e2e" stroke-width="0.8"/>
<line x1="618" y1="451" x2="752" y2="453.5" stroke="#252525" stroke-width="1.2"/>
<line x1="618" y1="474" x2="752" y2="476.5" stroke="#2e2e2e" stroke-width="0.8"/>
<line x1="618" y1="527" x2="752" y2="529.5" stroke="#252525" stroke-width="1.2"/>
<line x1="618" y1="550" x2="752" y2="552.5" stroke="#2e2e2e" stroke-width="0.8"/>
<line x1="618" y1="603" x2="752" y2="605.5" stroke="#252525" stroke-width="1.2"/>
<line x1="618" y1="624" x2="752" y2="626.5" stroke="#2e2e2e" stroke-width="0.8"/>
<line x1="618" y1="679" x2="752" y2="681.5" stroke="#252525" stroke-width="1.2"/>
<line x1="618" y1="701" x2="752" y2="703.5" stroke="#2e2e2e" stroke-width="0.8"/>
<line x1="618" y1="754" x2="752" y2="756.5" stroke="#252525" stroke-width="1.2"/>
<line x1="618" y1="776" x2="752" y2="778.5" stroke="#2e2e2e" stroke-width="0.8"/>
<line x1="618" y1="830" x2="752" y2="832.5" stroke="#252525" stroke-width="1.2"/>
<line x1="618" y1="845" x2="752" y2="847.5" stroke="#2e2e2e" stroke-width="0.8"/>
<line x1="752" y1="453.5" x2="801" y2="454.5" stroke="#252525" stroke-width="1.2"/>
<line x1="752" y1="476.5" x2="801" y2="477.5" stroke="#2e2e2e" stroke-width="0.8"/>
<line x1="752" y1="529.5" x2="801" y2="530.5" stroke="#252525" stroke-width="1.2"/>
<line x1="752" y1="552.5" x2="801" y2="553.5" stroke="#2e2e2e" stroke-width="0.8"/>
<line x1="752" y1="605.5" x2="801" y2="606.5" stroke="#252525" stroke-width="1.2"/>
<line x1="752" y1="626.5" x2="801" y2="627.5" stroke="#2e2e2e" stroke-width="0.8"/>
<line x1="752" y1="681.5" x2="801" y2="682.5" stroke="#252525" stroke-width="1.2"/>
<line x1="752" y1="703.5" x2="801" y2="704.5" stroke="#2e2e2e" stroke-width="0.8"/>
<line x1="752" y1="756.5" x2="801" y2="757.5" stroke="#252525" stroke-width="1.2"/>
<line x1="752" y1="778.5" x2="801" y2="779.5" stroke="#2e2e2e" stroke-width="0.8"/>
<line x1="752" y1="832.5" x2="801" y2="833.5" stroke="#252525" stroke-width="1.2"/>
<line x1="752" y1="847.5" x2="801" y2="848.5" stroke="#2e2e2e" stroke-width="0.8"/>
<line x1="801" y1="454.5" x2="924" y2="456.8" stroke="#252525" stroke-width="1.2"/>
<line x1="801" y1="477.5" x2="924" y2="479.8" stroke="#2e2e2e" stroke-width="0.8"/>
<line x1="801" y1="530.5" x2="924" y2="532.8" stroke="#252525" stroke-width="1.2"/>
<line x1="801" y1="553.5" x2="924" y2="555.8" stroke="#2e2e2e" stroke-width="0.8"/>
<line x1="801" y1="606.5" x2="924" y2="608.8" stroke="#252525" stroke-width="1.2"/>
<line x1="801" y1="627.5" x2="924" y2="629.8" stroke="#2e2e2e" stroke-width="0.8"/>
<line x1="801" y1="682.5" x2="924" y2="684.8" stroke="#252525" stroke-width="1.2"/>
<line x1="801" y1="704.5" x2="924" y2="706.8" stroke="#2e2e2e" stroke-width="0.8"/>
<line x1="801" y1="757.5" x2="924" y2="759.8" stroke="#252525" stroke-width="1.2"/>
<line x1="801" y1="779.5" x2="924" y2="781.8" stroke="#2e2e2e" stroke-width="0.8"/>
<line x1="801" y1="833.5" x2="924" y2="835.8" stroke="#252525" stroke-width="1.2"/>
<line x1="801" y1="848.5" x2="924" y2="850.8" stroke="#2e2e2e" stroke-width="0.8"/>
<line x1="924" y1="456.8" x2="998" y2="458.2" stroke="#252525" stroke-width="1.2"/>
<line x1="924" y1="479.8" x2="998" y2="481.2" stroke="#2e2e2e" stroke-width="0.8"/>
<line x1="924" y1="532.8" x2="998" y2="534.2" stroke="#252525" stroke-width="1.2"/>
<line x1="924" y1="555.8" x2="998" y2="557.2" stroke="#2e2e2e" stroke-width="0.8"/>
<line x1="924" y1="608.8" x2="998" y2="610.2" stroke="#252525" stroke-width="1.2"/>
<line x1="924" y1="629.8" x2="998" y2="631.2" stroke="#2e2e2e" stroke-width="0.8"/>
<line x1="924" y1="684.8" x2="998" y2="686.2" stroke="#252525" stroke-width="1.2"/>
<line x1="924" y1="706.8" x2="998" y2="708.2" stroke="#2e2e2e" stroke-width="0.8"/>
<line x1="924" y1="759.8" x2="998" y2="761.2" stroke="#252525" stroke-width="1.2"/>
<line x1="924" y1="781.8" x2="998" y2="783.2" stroke="#2e2e2e" stroke-width="0.8"/>
<line x1="924" y1="835.8" x2="998" y2="837.2" stroke="#252525" stroke-width="1.2"/>
<line x1="924" y1="850.8" x2="998" y2="852.2" stroke="#2e2e2e" stroke-width="0.8"/>
<line x1="998" y1="458.2" x2="1010" y2="458.4" stroke="#252525" stroke-width="1.2"/>
<line x1="998" y1="481.2" x2="1010" y2="481.4" stroke="#2e2e2e" stroke-width="0.8"/>
<line x1="998" y1="534.2" x2="1010" y2="534.4" stroke="#252525" stroke-width="1.2"/>
<line x1="998" y1="557.2" x2="1010" y2="557.4" stroke="#2e2e2e" stroke-width="0.8"/>
<line x1="998" y1="610.2" x2="1010" y2="610.4" stroke="#252525" stroke-width="1.2"/>
<line x1="998" y1="631.2" x2="1010" y2="631.4" stroke="#2e2e2e" stroke-width="0.8"/>
<line x1="998" y1="686.2" x2="1010" y2="686.4" stroke="#252525" stroke-width="1.2"/>
<line x1="998" y1="708.2" x2="1010" y2="708.4" stroke="#2e2e2e" stroke-width="0.8"/>
<line x1="998" y1="761.2" x2="1010" y2="761.4" stroke="#252525" stroke-width="1.2"/>
<line x1="998" y1="783.2" x2="1010" y2="783.4" stroke="#2e2e2e" stroke-width="0.8"/>
<line x1="998" y1="837.2" x2="1010" y2="837.4" stroke="#252525" stroke-width="1.2"/>
<line x1="998" y1="852.2" x2="1010" y2="852.4" stroke="#2e2e2e" stroke-width="0.8"/>
<line x1="1010" y1="458.4" x2="1146" y2="461" stroke="#252525" stroke-width="1.2"/>
<line x1="1010" y1="481.4" x2="1146" y2="484" stroke="#2e2e2e" stroke-width="0.8"/>
<line x1="1010" y1="534.4" x2="1146" y2="537" stroke="#252525" stroke-width="1.2"/>
<line x1="1010" y1="557.4" x2="1146" y2="560" stroke="#2e2e2e" stroke-width="0.8"/>
<line x1="1010" y1="610.4" x2="1146" y2="613" stroke="#252525" stroke-width="1.2"/>
<line x1="1010" y1="631.4" x2="1146" y2="634" stroke="#2e2e2e" stroke-width="0.8"/>
<line x1="1010" y1="686.4" x2="1146" y2="689" stroke="#252525" stroke-width="1.2"/>
<line x1="1010" y1="708.4" x2="1146" y2="711" stroke="#2e2e2e" stroke-width="0.8"/>
<line x1="1010" y1="761.4" x2="1146" y2="764" stroke="#252525" stroke-width="1.2"/>
<line x1="1010" y1="783.4" x2="1146" y2="786" stroke="#2e2e2e" stroke-width="0.8"/>
<line x1="1010" y1="837.4" x2="1146" y2="840" stroke="#252525" stroke-width="1.2"/>
<line x1="1010" y1="852.4" x2="1146" y2="855" stroke="#2e2e2e" stroke-width="0.8"/>
<line x1="1146" y1="461" x2="1209" y2="456.6" stroke="#252525" stroke-width="1.2"/>
<line x1="1146" y1="484" x2="1209" y2="479.6" stroke="#2e2e2e" stroke-width="0.8"/>
<line x1="1146" y1="537" x2="1209" y2="532.6" stroke="#252525" stroke-width="1.2"/>
<line x1="1146" y1="560" x2="1209" y2="555.6" stroke="#2e2e2e" stroke-width="0.8"/>
<line x1="1146" y1="613" x2="1209" y2="608.6" stroke="#252525" stroke-width="1.2"/>
<line x1="1146" y1="634" x2="1209" y2="629.6" stroke="#2e2e2e" stroke-width="0.8"/>
<line x1="1146" y1="689" x2="1209" y2="684.6" stroke="#252525" stroke-width="1.2"/>
<line x1="1146" y1="711" x2="1209" y2="706.6" stroke="#2e2e2e" stroke-width="0.8"/>
<line x1="1146" y1="764" x2="1209" y2="759.6" stroke="#252525" stroke-width="1.2"/>
<line x1="1146" y1="786" x2="1209" y2="781.6" stroke="#2e2e2e" stroke-width="0.8"/>
<line x1="1146" y1="840" x2="1209" y2="835.6" stroke="#252525" stroke-width="1.2"/>
<line x1="1146" y1="855" x2="1209" y2="850.6" stroke="#2e2e2e" stroke-width="0.8"/>
<line x1="1209" y1="456.6" x2="1235" y2="454.8" stroke="#252525" stroke-width="1.2"/>
<line x1="1209" y1="479.6" x2="1235" y2="477.8" stroke="#2e2e2e" stroke-width="0.8"/>
<line x1="1209" y1="532.6" x2="1235" y2="530.8" stroke="#252525" stroke-width="1.2"/>
<line x1="1209" y1="555.6" x2="1235" y2="553.8" stroke="#2e2e2e" stroke-width="0.8"/>
<line x1="1209" y1="608.6" x2="1235" y2="606.8" stroke="#252525" stroke-width="1.2"/>
<line x1="1209" y1="629.6" x2="1235" y2="627.8" stroke="#2e2e2e" stroke-width="0.8"/>
<line x1="1209" y1="684.6" x2="1235" y2="682.8" stroke="#252525" stroke-width="1.2"/>
<line x1="1209" y1="706.6" x2="1235" y2="704.8" stroke="#2e2e2e" stroke-width="0.8"/>
<line x1="1209" y1="759.6" x2="1235" y2="757.8" stroke="#252525" stroke-width="1.2"/>
<line x1="1209" y1="781.6" x2="1235" y2="779.8" stroke="#2e2e2e" stroke-width="0.8"/>
<line x1="1209" y1="835.6" x2="1235" y2="833.8" stroke="#252525" stroke-width="1.2"/>
<line x1="1209" y1="850.6" x2="1235" y2="848.8" stroke="#2e2e2e" stroke-width="0.8"/>
<line x1="1235" y1="454.8" x2="1346" y2="447" stroke="#252525" stroke-width="1.2"/>
<line x1="1235" y1="477.8" x2="1346" y2="470" stroke="#2e2e2e" stroke-width="0.8"/>
<line x1="1235" y1="530.8" x2="1346" y2="523" stroke="#252525" stroke-width="1.2"/>
<line x1="1235" y1="553.8" x2="1346" y2="546" stroke="#2e2e2e" stroke-width="0.8"/>
<line x1="1235" y1="606.8" x2="1346" y2="599" stroke="#252525" stroke-width="1.2"/>
<line x1="1235" y1="627.8" x2="1346" y2="620" stroke="#2e2e2e" stroke-width="0.8"/>
<line x1="1235" y1="682.8" x2="1346" y2="675" stroke="#252525" stroke-width="1.2"/>
<line x1="1235" y1="704.8" x2="1346" y2="697" stroke="#2e2e2e" stroke-width="0.8"/>
<line x1="1235" y1="757.8" x2="1346" y2="750" stroke="#252525" stroke-width="1.2"/>
<line x1="1235" y1="779.8" x2="1346" y2="772" stroke="#2e2e2e" stroke-width="0.8"/>
<line x1="1235" y1="833.8" x2="1346" y2="826" stroke="#252525" stroke-width="1.2"/>
<line x1="1235" y1="848.8" x2="1346" y2="841" stroke="#2e2e2e" stroke-width="0.8"/>
<line x1="408" y1="389" x2="408" y2="841" stroke="#1a1a1a" stroke-width="1.2"/>
<line x1="531" y1="347.3" x2="531" y2="843.3" stroke="#1a1a1a" stroke-width="1.2"/>
<line x1="604" y1="348.7" x2="604" y2="844.7" stroke="#1a1a1a" stroke-width="1.2"/>
<line x1="618" y1="393" x2="618" y2="845" stroke="#1a1a1a" stroke-width="1.2"/>
<line x1="752" y1="395.5" x2="752" y2="847.5" stroke="#1a1a1a" stroke-width="1.2"/>
<line x1="801" y1="396.5" x2="801" y2="848.5" stroke="#1a1a1a" stroke-width="1.2"/>
<line x1="924" y1="354.8" x2="924" y2="850.8" stroke="#1a1a1a" stroke-width="1.2"/>
<line x1="998" y1="356.2" x2="998" y2="852.2" stroke="#1a1a1a" stroke-width="1.2"/>
<line x1="1010" y1="400.4" x2="1010" y2="852.4" stroke="#1a1a1a" stroke-width="1.2"/>
<line x1="1146" y1="403" x2="1146" y2="855" stroke="#1a1a1a" stroke-width="1.2"/>
<line x1="1209" y1="398.6" x2="1209" y2="850.6" stroke="#1a1a1a" stroke-width="1.2"/>
<line x1="1235" y1="396.8" x2="1235" y2="848.8" stroke="#1a1a1a" stroke-width="1.2"/>
<line x1="1346" y1="389" x2="1346" y2="841" stroke="#1a1a1a" stroke-width="1.2"/>
<polygon points="461,390 500,390.7 500,448.7 461,448" fill="#2c2422"/>
<line x1="466.6" y1="391.1" x2="466.6" y2="447.1" stroke="#c9c7c4" stroke-width="1"/>
<line x1="472.1" y1="391.2" x2="472.1" y2="447.2" stroke="#c9c7c4" stroke-width="1"/>
<line x1="477.7" y1="391.3" x2="477.7" y2="447.3" stroke="#c9c7c4" stroke-width="1"/>
<line x1="483.3" y1="391.4" x2="483.3" y2="447.4" stroke="#c9c7c4" stroke-width="1"/>
<line x1="488.9" y1="391.5" x2="488.9" y2="447.5" stroke="#c9c7c4" stroke-width="1"/>
<line x1="494.4" y1="391.6" x2="494.4" y2="447.6" stroke="#c9c7c4" stroke-width="1"/>
<polygon points="434,397.5 461,398 461,436 434,435.5" fill="#1d1c1c"/>
<polygon points="436,399.5 446.5,399.7 446.5,433.7 436,433.5" fill="#5c5652"/>
<polygon points="448.5,399.8 459,400 459,434 448.5,433.8" fill="#8a8480"/>
<polygon points="454.6,399.9 458,399.9 458,433.9 454.6,433.9" fill="#a7a19d"/>
<polygon points="500,398.7 528,399.3 528,437.3 500,436.7" fill="#1d1c1c"/>
<polygon points="502,400.8 513,401 513,435 502,434.8" fill="#5c5652"/>
<polygon points="515,401 526,401.2 526,435.2 515,435" fill="#8a8480"/>
<polygon points="521.3,401.2 525,401.2 525,435.2 521.3,435.2" fill="#a7a19d"/>
<polygon points="461,456 529,457.3 529,468.3 461,467" fill="#2a2a2a"/>
<polygon points="463,457 528,458.3 528,462.3 463,461" fill="#cfcfcd"/>
<polygon points="469,462.2 526,463.2 526,467.2 469,466.2" fill="#c6c6c4"/>
<polygon points="461,471 500,471.7 500,524.7 461,524" fill="#2c2422"/>
<line x1="466.6" y1="472.1" x2="466.6" y2="523.1" stroke="#6f6663" stroke-width="1"/>
<line x1="472.1" y1="472.2" x2="472.1" y2="523.2" stroke="#6f6663" stroke-width="1"/>
<line x1="477.7" y1="472.3" x2="477.7" y2="523.3" stroke="#6f6663" stroke-width="1"/>
<line x1="483.3" y1="472.4" x2="483.3" y2="523.4" stroke="#6f6663" stroke-width="1"/>
<line x1="488.9" y1="472.5" x2="488.9" y2="523.5" stroke="#6f6663" stroke-width="1"/>
<line x1="494.4" y1="472.6" x2="494.4" y2="523.6" stroke="#6f6663" stroke-width="1"/>
<polygon points="434,473.5 461,474 461,511 434,510.5" fill="#1d1c1c"/>
<polygon points="436,475.5 446.5,475.7 446.5,508.7 436,508.5" fill="#5c5652"/>
<polygon points="448.5,475.8 459,476 459,509 448.5,508.8" fill="#8a8480"/>
<polygon points="454.6,475.9 458,475.9 458,508.9 454.6,508.9" fill="#a7a19d"/>
<polygon points="500,474.7 528,475.3 528,512.3 500,511.7" fill="#1d1c1c"/>
<polygon points="502,476.8 513,477 513,510 502,509.8" fill="#5c5652"/>
<polygon points="515,477 526,477.2 526,510.2 515,510" fill="#8a8480"/>
<polygon points="521.3,477.2 525,477.2 525,510.2 521.3,510.2" fill="#a7a19d"/>
<polygon points="461,532 529,533.3 529,544.3 461,543" fill="#2a2a2a"/>
<polygon points="463,533 528,534.3 528,538.3 463,537" fill="#cfcfcd"/>
<polygon points="469,538.2 526,539.2 526,543.2 469,542.2" fill="#c6c6c4"/>
<polygon points="461,547 500,547.7 500,600.7 461,600" fill="#2c2422"/>
<line x1="466.6" y1="548.1" x2="466.6" y2="599.1" stroke="#6f6663" stroke-width="1"/>
<line x1="472.1" y1="548.2" x2="472.1" y2="599.2" stroke="#6f6663" stroke-width="1"/>
<line x1="477.7" y1="548.3" x2="477.7" y2="599.3" stroke="#6f6663" stroke-width="1"/>
<line x1="483.3" y1="548.4" x2="483.3" y2="599.4" stroke="#6f6663" stroke-width="1"/>
<line x1="488.9" y1="548.5" x2="488.9" y2="599.5" stroke="#6f6663" stroke-width="1"/>
<line x1="494.4" y1="548.6" x2="494.4" y2="599.6" stroke="#6f6663" stroke-width="1"/>
<polygon points="434,549.5 461,550 461,587 434,586.5" fill="#1d1c1c"/>
<polygon points="436,551.5 446.5,551.7 446.5,584.7 436,584.5" fill="#5c5652"/>
<polygon points="448.5,551.8 459,552 459,585 448.5,584.8" fill="#8a8480"/>
<polygon points="454.6,551.9 458,552 458,585 454.6,584.9" fill="#a7a19d"/>
<polygon points="500,550.7 528,551.3 528,588.3 500,587.7" fill="#1d1c1c"/>
<polygon points="502,552.8 513,553 513,586 502,585.8" fill="#5c5652"/>
<polygon points="515,553 526,553.2 526,586.2 515,586" fill="#8a8480"/>
<polygon points="521.3,553.2 525,553.2 525,586.2 521.3,586.2" fill="#a7a19d"/>
<polygon points="461,608 529,609.3 529,620.3 461,619" fill="#2a2a2a"/>
<polygon points="463,609 528,610.3 528,614.3 463,613" fill="#cfcfcd"/>
<polygon points="469,614.2 526,615.2 526,619.2 469,618.2" fill="#c6c6c4"/>
<polygon points="461,621 500,621.7 500,676.7 461,676" fill="#2c2422"/>
<line x1="466.6" y1="622.1" x2="466.6" y2="675.1" stroke="#6f6663" stroke-width="1"/>
<line x1="472.1" y1="622.2" x2="472.1" y2="675.2" stroke="#6f6663" stroke-width="1"/>
<line x1="477.7" y1="622.3" x2="477.7" y2="675.3" stroke="#6f6663" stroke-width="1"/>
<line x1="483.3" y1="622.4" x2="483.3" y2="675.4" stroke="#6f6663" stroke-width="1"/>
<line x1="488.9" y1="622.5" x2="488.9" y2="675.5" stroke="#6f6663" stroke-width="1"/>
<line x1="494.4" y1="622.6" x2="494.4" y2="675.6" stroke="#6f6663" stroke-width="1"/>
<polygon points="434,623.5 461,624 461,661 434,660.5" fill="#1d1c1c"/>
<polygon points="436,625.5 446.5,625.7 446.5,658.7 436,658.5" fill="#5c5652"/>
<polygon points="448.5,625.8 459,626 459,659 448.5,658.8" fill="#8a8480"/>
<polygon points="454.6,625.9 458,626 458,659 454.6,658.9" fill="#a7a19d"/>
<polygon points="500,624.7 528,625.3 528,662.3 500,661.7" fill="#1d1c1c"/>
<polygon points="502,626.8 513,627 513,660 502,659.8" fill="#5c5652"/>
<polygon points="515,627 526,627.2 526,660.2 515,660" fill="#8a8480"/>
<polygon points="521.3,627.2 525,627.2 525,660.2 521.3,660.2" fill="#a7a19d"/>
<polygon points="461,684 529,685.3 529,696.3 461,695" fill="#2a2a2a"/>
<polygon points="463,685 528,686.3 528,690.3 463,689" fill="#cfcfcd"/>
<polygon points="469,690.2 526,691.2 526,695.2 469,694.2" fill="#c6c6c4"/>
<polygon points="461,698 500,698.7 500,751.7 461,751" fill="#2c2422"/>
<line x1="466.6" y1="699.1" x2="466.6" y2="750.1" stroke="#c9c7c4" stroke-width="1"/>
<line x1="472.1" y1="699.2" x2="472.1" y2="750.2" stroke="#c9c7c4" stroke-width="1"/>
<line x1="477.7" y1="699.3" x2="477.7" y2="750.3" stroke="#c9c7c4" stroke-width="1"/>
<line x1="483.3" y1="699.4" x2="483.3" y2="750.4" stroke="#c9c7c4" stroke-width="1"/>
<line x1="488.9" y1="699.5" x2="488.9" y2="750.5" stroke="#c9c7c4" stroke-width="1"/>
<line x1="494.4" y1="699.6" x2="494.4" y2="750.6" stroke="#c9c7c4" stroke-width="1"/>
<polygon points="434,700.5 461,701 461,738 434,737.5" fill="#1d1c1c"/>
<polygon points="436,702.5 446.5,702.7 446.5,735.7 436,735.5" fill="#5c5652"/>
<polygon points="448.5,702.8 459,703 459,736 448.5,735.8" fill="#8a8480"/>
<polygon points="454.6,702.9 458,703 458,736 454.6,735.9" fill="#a7a19d"/>
<polygon points="500,701.7 528,702.3 528,739.3 500,738.7" fill="#1d1c1c"/>
<polygon points="502,703.8 513,704 513,737 502,736.8" fill="#5c5652"/>
<polygon points="515,704 526,704.2 526,737.2 515,737" fill="#8a8480"/>
<polygon points="521.3,704.2 525,704.2 525,737.2 521.3,737.2" fill="#a7a19d"/>
<polygon points="461,759 529,760.3 529,771.3 461,770" fill="#2a2a2a"/>
<polygon points="463,760 528,761.3 528,765.3 463,764" fill="#cfcfcd"/>
<polygon points="469,765.2 526,766.2 526,770.2 469,769.2" fill="#c6c6c4"/>
<polygon points="461,773 500,773.7 500,827.7 461,827" fill="#2c2422"/>
<line x1="466.6" y1="774.1" x2="466.6" y2="826.1" stroke="#c9c7c4" stroke-width="1"/>
<line x1="472.1" y1="774.2" x2="472.1" y2="826.2" stroke="#c9c7c4" stroke-width="1"/>
<line x1="477.7" y1="774.3" x2="477.7" y2="826.3" stroke="#c9c7c4" stroke-width="1"/>
<line x1="483.3" y1="774.4" x2="483.3" y2="826.4" stroke="#c9c7c4" stroke-width="1"/>
<line x1="488.9" y1="774.5" x2="488.9" y2="826.5" stroke="#c9c7c4" stroke-width="1"/>
<line x1="494.4" y1="774.6" x2="494.4" y2="826.6" stroke="#c9c7c4" stroke-width="1"/>
<polygon points="434,775.5 461,776 461,813 434,812.5" fill="#1d1c1c"/>
<polygon points="436,777.5 446.5,777.7 446.5,810.7 436,810.5" fill="#5c5652"/>
<polygon points="448.5,777.8 459,778 459,811 448.5,810.8" fill="#8a8480"/>
<polygon points="454.6,777.9 458,778 458,811 454.6,810.9" fill="#a7a19d"/>
<polygon points="500,776.7 528,777.3 528,814.3 500,813.7" fill="#1d1c1c"/>
<polygon points="502,778.8 513,779 513,812 502,811.8" fill="#5c5652"/>
<polygon points="515,779 526,779.2 526,812.2 515,812" fill="#8a8480"/>
<polygon points="521.3,779.2 525,779.2 525,812.2 521.3,812.2" fill="#a7a19d"/>
<polygon points="461,835 529,836.3 529,847.3 461,846" fill="#2a2a2a"/>
<polygon points="463,836 528,837.3 528,841.3 463,840" fill="#cfcfcd"/>
<polygon points="469,841.2 526,842.2 526,846.2 469,845.2" fill="#c6c6c4"/>
<polygon points="618,393 633,393.3 633,451.3 618,451" fill="#2c2422"/>
<line x1="623" y1="394.1" x2="623" y2="450.1" stroke="#c9c7c4" stroke-width="1"/>
<line x1="628" y1="394.2" x2="628" y2="450.2" stroke="#c9c7c4" stroke-width="1"/>
<polygon points="661,393.8 699,394.5 699,452.5 661,451.8" fill="#2c2422"/>
<line x1="667.3" y1="394.9" x2="667.3" y2="450.9" stroke="#c9c7c4" stroke-width="1"/>
<line x1="673.7" y1="395" x2="673.7" y2="451" stroke="#c9c7c4" stroke-width="1"/>
<line x1="680" y1="395.2" x2="680" y2="451.2" stroke="#c9c7c4" stroke-width="1"/>
<line x1="686.3" y1="395.3" x2="686.3" y2="451.3" stroke="#c9c7c4" stroke-width="1"/>
<line x1="692.7" y1="395.4" x2="692.7" y2="451.4" stroke="#c9c7c4" stroke-width="1"/>
<polygon points="633,401.3 661,401.8 661,439.8 633,439.3" fill="#1d1c1c"/>
<polygon points="635,403.3 646,403.5 646,437.5 635,437.3" fill="#5c5652"/>
<polygon points="648,403.6 659,403.8 659,437.8 648,437.6" fill="#8a8480"/>
<polygon points="654.3,403.7 658,403.8 658,437.8 654.3,437.7" fill="#a7a19d"/>
<polygon points="699,402.5 729,403.1 729,441.1 699,440.5" fill="#1d1c1c"/>
<polygon points="701,404.6 713,404.8 713,438.8 701,438.6" fill="#5c5652"/>
<polygon points="715,404.8 727,405.1 727,439.1 715,438.8" fill="#8a8480"/>
<polygon points="721.8,405 726,405 726,439 721.8,439" fill="#a7a19d"/>
<polygon points="608,458.8 690,460.4 690,471.4 608,469.8" fill="#2a2a2a"/>
<polygon points="610,459.8 689,461.3 689,465.3 610,463.8" fill="#cfcfcd"/>
<polygon points="616,465 687,466.3 687,470.3 616,469" fill="#c6c6c4"/>
<polygon points="618,474 633,474.3 633,527.3 618,527" fill="#2c2422"/>
<line x1="623" y1="475.1" x2="623" y2="526.1" stroke="#6f6663" stroke-width="1"/>
<line x1="628" y1="475.2" x2="628" y2="526.2" stroke="#6f6663" stroke-width="1"/>
<polygon points="661,474.8 699,475.5 699,528.5 661,527.8" fill="#2c2422"/>
<line x1="667.3" y1="475.9" x2="667.3" y2="526.9" stroke="#6f6663" stroke-width="1"/>
<line x1="673.7" y1="476" x2="673.7" y2="527" stroke="#6f6663" stroke-width="1"/>
<line x1="680" y1="476.2" x2="680" y2="527.2" stroke="#6f6663" stroke-width="1"/>
<line x1="686.3" y1="476.3" x2="686.3" y2="527.3" stroke="#6f6663" stroke-width="1"/>
<line x1="692.7" y1="476.4" x2="692.7" y2="527.4" stroke="#6f6663" stroke-width="1"/>
<polygon points="633,477.3 661,477.8 661,514.8 633,514.3" fill="#1d1c1c"/>
<polygon points="635,479.3 646,479.5 646,512.5 635,512.3" fill="#5c5652"/>
<polygon points="648,479.6 659,479.8 659,512.8 648,512.6" fill="#8a8480"/>
<polygon points="654.3,479.7 658,479.8 658,512.8 654.3,512.7" fill="#a7a19d"/>
<polygon points="699,478.5 729,479.1 729,516.1 699,515.5" fill="#1d1c1c"/>
<polygon points="701,480.6 713,480.8 713,513.8 701,513.6" fill="#5c5652"/>
<polygon points="715,480.8 727,481.1 727,514.1 715,513.8" fill="#8a8480"/>
<polygon points="721.8,481 726,481 726,514 721.8,514" fill="#a7a19d"/>
<polygon points="608,534.8 690,536.4 690,547.4 608,545.8" fill="#2a2a2a"/>
<polygon points="610,535.8 689,537.3 689,541.3 610,539.8" fill="#cfcfcd"/>
<polygon points="616,541 687,542.3 687,546.3 616,545" fill="#c6c6c4"/>
<polygon points="618,550 633,550.3 633,603.3 618,603" fill="#2c2422"/>
<line x1="623" y1="551.1" x2="623" y2="602.1" stroke="#6f6663" stroke-width="1"/>
<line x1="628" y1="551.2" x2="628" y2="602.2" stroke="#6f6663" stroke-width="1"/>
<polygon points="661,550.8 699,551.5 699,604.5 661,603.8" fill="#2c2422"/>
<line x1="667.3" y1="551.9" x2="667.3" y2="602.9" stroke="#6f6663" stroke-width="1"/>
<line x1="673.7" y1="552" x2="673.7" y2="603" stroke="#6f6663" stroke-width="1"/>
<line x1="680" y1="552.2" x2="680" y2="603.2" stroke="#6f6663" stroke-width="1"/>
<line x1="686.3" y1="552.3" x2="686.3" y2="603.3" stroke="#6f6663" stroke-width="1"/>
<line x1="692.7" y1="552.4" x2="692.7" y2="603.4" stroke="#6f6663" stroke-width="1"/>
<polygon points="633,553.3 661,553.8 661,590.8 633,590.3" fill="#1d1c1c"/>
<polygon points="635,555.3 646,555.5 646,588.5 635,588.3" fill="#5c5652"/>
<polygon points="648,555.6 659,555.8 659,588.8 648,588.6" fill="#8a8480"/>
<polygon points="654.3,555.7 658,555.8 658,588.8 654.3,588.7" fill="#a7a19d"/>
<polygon points="699,554.5 729,555.1 729,592.1 699,591.5" fill="#1d1c1c"/>
<polygon points="701,556.6 713,556.8 713,589.8 701,589.6" fill="#5c5652"/>
<polygon points="715,556.8 727,557.1 727,590.1 715,589.8" fill="#8a8480"/>
<polygon points="721.8,557 726,557 726,590 721.8,590" fill="#a7a19d"/>
<polygon points="608,610.8 690,612.4 690,623.4 608,621.8" fill="#2a2a2a"/>
<polygon points="610,611.8 689,613.3 689,617.3 610,615.8" fill="#cfcfcd"/>
<polygon points="616,617 687,618.3 687,622.3 616,621" fill="#c6c6c4"/>
<polygon points="618,624 633,624.3 633,679.3 618,679" fill="#2c2422"/>
<line x1="623" y1="625.1" x2="623" y2="678.1" stroke="#6f6663" stroke-width="1"/>
<line x1="628" y1="625.2" x2="628" y2="678.2" stroke="#6f6663" stroke-width="1"/>
<polygon points="661,624.8 699,625.5 699,680.5 661,679.8" fill="#2c2422"/>
<line x1="667.3" y1="625.9" x2="667.3" y2="678.9" stroke="#6f6663" stroke-width="1"/>
<line x1="673.7" y1="626" x2="673.7" y2="679" stroke="#6f6663" stroke-width="1"/>
<line x1="680" y1="626.2" x2="680" y2="679.2" stroke="#6f6663" stroke-width="1"/>
<line x1="686.3" y1="626.3" x2="686.3" y2="679.3" stroke="#6f6663" stroke-width="1"/>
<line x1="692.7" y1="626.4" x2="692.7" y2="679.4" stroke="#6f6663" stroke-width="1"/>
<polygon points="633,627.3 661,627.8 661,664.8 633,664.3" fill="#1d1c1c"/>
<polygon points="635,629.3 646,629.5 646,662.5 635,662.3" fill="#5c5652"/>
<polygon points="648,629.6 659,629.8 659,662.8 648,662.6" fill="#8a8480"/>
<polygon points="654.3,629.7 658,629.8 658,662.8 654.3,662.7" fill="#a7a19d"/>
<polygon points="699,628.5 729,629.1 729,666.1 699,665.5" fill="#1d1c1c"/>
<polygon points="701,630.6 713,630.8 713,663.8 701,663.6" fill="#5c5652"/>
<polygon points="715,630.8 727,631.1 727,664.1 715,663.8" fill="#8a8480"/>
<polygon points="721.8,631 726,631 726,664 721.8,664" fill="#a7a19d"/>
<polygon points="608,686.8 690,688.4 690,699.4 608,697.8" fill="#2a2a2a"/>
<polygon points="610,687.8 689,689.3 689,693.3 610,691.8" fill="#cfcfcd"/>
<polygon points="616,693 687,694.3 687,698.3 616,697" fill="#c6c6c4"/>
<polygon points="618,701 633,701.3 633,754.3 618,754" fill="#2c2422"/>
<line x1="623" y1="702.1" x2="623" y2="753.1" stroke="#c9c7c4" stroke-width="1"/>
<line x1="628" y1="702.2" x2="628" y2="753.2" stroke="#c9c7c4" stroke-width="1"/>
<polygon points="661,701.8 699,702.5 699,755.5 661,754.8" fill="#2c2422"/>
<line x1="667.3" y1="702.9" x2="667.3" y2="753.9" stroke="#c9c7c4" stroke-width="1"/>
<line x1="673.7" y1="703" x2="673.7" y2="754" stroke="#c9c7c4" stroke-width="1"/>
<line x1="680" y1="703.2" x2="680" y2="754.2" stroke="#c9c7c4" stroke-width="1"/>
<line x1="686.3" y1="703.3" x2="686.3" y2="754.3" stroke="#c9c7c4" stroke-width="1"/>
<line x1="692.7" y1="703.4" x2="692.7" y2="754.4" stroke="#c9c7c4" stroke-width="1"/>
<polygon points="633,704.3 661,704.8 661,741.8 633,741.3" fill="#1d1c1c"/>
<polygon points="635,706.3 646,706.5 646,739.5 635,739.3" fill="#5c5652"/>
<polygon points="648,706.6 659,706.8 659,739.8 648,739.6" fill="#8a8480"/>
<polygon points="654.3,706.7 658,706.8 658,739.8 654.3,739.7" fill="#a7a19d"/>
<polygon points="699,705.5 729,706.1 729,743.1 699,742.5" fill="#1d1c1c"/>
<polygon points="701,707.6 713,707.8 713,740.8 701,740.6" fill="#5c5652"/>
<polygon points="715,707.8 727,708.1 727,741.1 715,740.8" fill="#8a8480"/>
<polygon points="721.8,708 726,708 726,741 721.8,741" fill="#a7a19d"/>
<polygon points="608,761.8 690,763.4 690,774.4 608,772.8" fill="#2a2a2a"/>
<polygon points="610,762.8 689,764.3 689,768.3 610,766.8" fill="#cfcfcd"/>
<polygon points="616,768 687,769.3 687,773.3 616,772" fill="#c6c6c4"/>
<polygon points="618,776 633,776.3 633,830.3 618,830" fill="#2c2422"/>
<line x1="623" y1="777.1" x2="623" y2="829.1" stroke="#c9c7c4" stroke-width="1"/>
<line x1="628" y1="777.2" x2="628" y2="829.2" stroke="#c9c7c4" stroke-width="1"/>
<polygon points="661,776.8 699,777.5 699,831.5 661,830.8" fill="#2c2422"/>
<line x1="667.3" y1="777.9" x2="667.3" y2="829.9" stroke="#c9c7c4" stroke-width="1"/>
<line x1="673.7" y1="778" x2="673.7" y2="830" stroke="#c9c7c4" stroke-width="1"/>
<line x1="680" y1="778.2" x2="680" y2="830.2" stroke="#c9c7c4" stroke-width="1"/>
<line x1="686.3" y1="778.3" x2="686.3" y2="830.3" stroke="#c9c7c4" stroke-width="1"/>
<line x1="692.7" y1="778.4" x2="692.7" y2="830.4" stroke="#c9c7c4" stroke-width="1"/>
<polygon points="633,779.3 661,779.8 661,816.8 633,816.3" fill="#1d1c1c"/>
<polygon points="635,781.3 646,781.5 646,814.5 635,814.3" fill="#5c5652"/>
<polygon points="648,781.6 659,781.8 659,814.8 648,814.6" fill="#8a8480"/>
<polygon points="654.3,781.7 658,781.8 658,814.8 654.3,814.7" fill="#a7a19d"/>
<polygon points="699,780.5 729,781.1 729,818.1 699,817.5" fill="#1d1c1c"/>
<polygon points="701,782.6 713,782.8 713,815.8 701,815.6" fill="#5c5652"/>
<polygon points="715,782.8 727,783.1 727,816.1 715,815.8" fill="#8a8480"/>
<polygon points="721.8,783 726,783 726,816 721.8,816" fill="#a7a19d"/>
<polygon points="608,837.8 690,839.4 690,850.4 608,848.8" fill="#2a2a2a"/>
<polygon points="610,838.8 689,840.3 689,844.3 610,842.8" fill="#cfcfcd"/>
<polygon points="616,844 687,845.3 687,849.3 616,848" fill="#c6c6c4"/>
<polygon points="855,397.5 892,398.2 892,456.2 855,455.5" fill="#2c2422"/>
<line x1="861.2" y1="398.6" x2="861.2" y2="454.6" stroke="#c9c7c4" stroke-width="1"/>
<line x1="867.3" y1="398.7" x2="867.3" y2="454.7" stroke="#c9c7c4" stroke-width="1"/>
<line x1="873.5" y1="398.8" x2="873.5" y2="454.8" stroke="#c9c7c4" stroke-width="1"/>
<line x1="879.7" y1="399" x2="879.7" y2="455" stroke="#c9c7c4" stroke-width="1"/>
<line x1="885.8" y1="399.1" x2="885.8" y2="455.1" stroke="#c9c7c4" stroke-width="1"/>
<polygon points="827,405 855,405.5 855,443.5 827,443" fill="#1d1c1c"/>
<polygon points="829,407 840,407.2 840,441.2 829,441" fill="#5c5652"/>
<polygon points="842,407.2 853,407.5 853,441.5 842,441.2" fill="#8a8480"/>
<polygon points="848.3,407.4 852,407.4 852,441.4 848.3,441.4" fill="#a7a19d"/>
<polygon points="893,406.2 922,406.8 922,444.8 893,444.2" fill="#1d1c1c"/>
<polygon points="895,408.3 906.5,408.5 906.5,442.5 895,442.3" fill="#5c5652"/>
<polygon points="908.5,408.5 920,408.7 920,442.7 908.5,442.5" fill="#8a8480"/>
<polygon points="915,408.6 919,408.7 919,442.7 915,442.6" fill="#a7a19d"/>
<polygon points="854,463.5 922,464.8 922,475.8 854,474.5" fill="#2a2a2a"/>
<polygon points="856,464.5 921,465.7 921,469.7 856,468.5" fill="#cfcfcd"/>
<polygon points="862,469.6 919,470.7 919,474.7 862,473.6" fill="#c6c6c4"/>
<polygon points="855,478.5 892,479.2 892,532.2 855,531.5" fill="#2c2422"/>
<line x1="861.2" y1="479.6" x2="861.2" y2="530.6" stroke="#6f6663" stroke-width="1"/>
<line x1="867.3" y1="479.7" x2="867.3" y2="530.7" stroke="#6f6663" stroke-width="1"/>
<line x1="873.5" y1="479.8" x2="873.5" y2="530.8" stroke="#6f6663" stroke-width="1"/>
<line x1="879.7" y1="480" x2="879.7" y2="531" stroke="#6f6663" stroke-width="1"/>
<line x1="885.8" y1="480.1" x2="885.8" y2="531.1" stroke="#6f6663" stroke-width="1"/>
<polygon points="827,481 855,481.5 855,518.5 827,518" fill="#1d1c1c"/>
<polygon points="829,483 840,483.2 840,516.2 829,516" fill="#5c5652"/>
<polygon points="842,483.2 853,483.5 853,516.5 842,516.2" fill="#8a8480"/>
<polygon points="848.3,483.4 852,483.4 852,516.4 848.3,516.4" fill="#a7a19d"/>
<polygon points="893,482.2 922,482.8 922,519.8 893,519.2" fill="#1d1c1c"/>
<polygon points="895,484.3 906.5,484.5 906.5,517.5 895,517.3" fill="#5c5652"/>
<polygon points="908.5,484.5 920,484.7 920,517.7 908.5,517.5" fill="#8a8480"/>
<polygon points="915,484.6 919,484.7 919,517.7 915,517.6" fill="#a7a19d"/>
<polygon points="854,539.5 922,540.8 922,551.8 854,550.5" fill="#2a2a2a"/>
<polygon points="856,540.5 921,541.7 921,545.7 856,544.5" fill="#cfcfcd"/>
<polygon points="862,545.6 919,546.7 919,550.7 862,549.6" fill="#c6c6c4"/>
<polygon points="855,554.5 892,555.2 892,608.2 855,607.5" fill="#2c2422"/>
<line x1="861.2" y1="555.6" x2="861.2" y2="606.6" stroke="#6f6663" stroke-width="1"/>
<line x1="867.3" y1="555.7" x2="867.3" y2="606.7" stroke="#6f6663" stroke-width="1"/>
<line x1="873.5" y1="555.8" x2="873.5" y2="606.8" stroke="#6f6663" stroke-width="1"/>
<line x1="879.7" y1="556" x2="879.7" y2="607" stroke="#6f6663" stroke-width="1"/>
<line x1="885.8" y1="556.1" x2="885.8" y2="607.1" stroke="#6f6663" stroke-width="1"/>
<polygon points="827,557 855,557.5 855,594.5 827,594" fill="#1d1c1c"/>
<polygon points="829,559 840,559.2 840,592.2 829,592" fill="#5c5652"/>
<polygon points="842,559.2 853,559.5 853,592.5 842,592.2" fill="#8a8480"/>
<polygon points="848.3,559.4 852,559.4 852,592.4 848.3,592.4" fill="#a7a19d"/>
<polygon points="893,558.2 922,558.8 922,595.8 893,595.2" fill="#1d1c1c"/>
<polygon points="895,560.3 906.5,560.5 906.5,593.5 895,593.3" fill="#5c5652"/>
<polygon points="908.5,560.5 920,560.7 920,593.7 908.5,593.5" fill="#8a8480"/>
<polygon points="915,560.6 919,560.7 919,593.7 915,593.6" fill="#a7a19d"/>
<polygon points="854,615.5 922,616.8 922,627.8 854,626.5" fill="#2a2a2a"/>
<polygon points="856,616.5 921,617.7 921,621.7 856,620.5" fill="#cfcfcd"/>
<polygon points="862,621.6 919,622.7 919,626.7 862,625.6" fill="#c6c6c4"/>
<polygon points="855,628.5 892,629.2 892,684.2 855,683.5" fill="#2c2422"/>
<line x1="861.2" y1="629.6" x2="861.2" y2="682.6" stroke="#6f6663" stroke-width="1"/>
<line x1="867.3" y1="629.7" x2="867.3" y2="682.7" stroke="#6f6663" stroke-width="1"/>
<line x1="873.5" y1="629.8" x2="873.5" y2="682.8" stroke="#6f6663" stroke-width="1"/>
<line x1="879.7" y1="630" x2="879.7" y2="683" stroke="#6f6663" stroke-width="1"/>
<line x1="885.8" y1="630.1" x2="885.8" y2="683.1" stroke="#6f6663" stroke-width="1"/>
<polygon points="827,631 855,631.5 855,668.5 827,668" fill="#1d1c1c"/>
<polygon points="829,633 840,633.2 840,666.2 829,666" fill="#5c5652"/>
<polygon points="842,633.2 853,633.5 853,666.5 842,666.2" fill="#8a8480"/>
<polygon points="848.3,633.4 852,633.4 852,666.4 848.3,666.4" fill="#a7a19d"/>
<polygon points="893,632.2 922,632.8 922,669.8 893,669.2" fill="#1d1c1c"/>
<polygon points="895,634.3 906.5,634.5 906.5,667.5 895,667.3" fill="#5c5652"/>
<polygon points="908.5,634.5 920,634.7 920,667.7 908.5,667.5" fill="#8a8480"/>
<polygon points="915,634.6 919,634.7 919,667.7 915,667.6" fill="#a7a19d"/>
<polygon points="854,691.5 922,692.8 922,703.8 854,702.5" fill="#2a2a2a"/>
<polygon points="856,692.5 921,693.7 921,697.7 856,696.5" fill="#cfcfcd"/>
<polygon points="862,697.6 919,698.7 919,702.7 862,701.6" fill="#c6c6c4"/>
<polygon points="855,705.5 892,706.2 892,759.2 855,758.5" fill="#2c2422"/>
<line x1="861.2" y1="706.6" x2="861.2" y2="757.6" stroke="#c9c7c4" stroke-width="1"/>
<line x1="867.3" y1="706.7" x2="867.3" y2="757.7" stroke="#c9c7c4" stroke-width="1"/>
<line x1="873.5" y1="706.8" x2="873.5" y2="757.8" stroke="#c9c7c4" stroke-width="1"/>
<line x1="879.7" y1="707" x2="879.7" y2="758" stroke="#c9c7c4" stroke-width="1"/>
<line x1="885.8" y1="707.1" x2="885.8" y2="758.1" stroke="#c9c7c4" stroke-width="1"/>
<polygon points="827,708 855,708.5 855,745.5 827,745" fill="#1d1c1c"/>
<polygon points="829,710 840,710.2 840,743.2 829,743" fill="#5c5652"/>
<polygon points="842,710.2 853,710.5 853,743.5 842,743.2" fill="#8a8480"/>
<polygon points="848.3,710.4 852,710.4 852,743.4 848.3,743.4" fill="#a7a19d"/>
<polygon points="893,709.2 922,709.8 922,746.8 893,746.2" fill="#1d1c1c"/>
<polygon points="895,711.3 906.5,711.5 906.5,744.5 895,744.3" fill="#5c5652"/>
<polygon points="908.5,711.5 920,711.7 920,744.7 908.5,744.5" fill="#8a8480"/>
<polygon points="915,711.6 919,711.7 919,744.7 915,744.6" fill="#a7a19d"/>
<polygon points="854,766.5 922,767.8 922,778.8 854,777.5" fill="#2a2a2a"/>
<polygon points="856,767.5 921,768.7 921,772.7 856,771.5" fill="#cfcfcd"/>
<polygon points="862,772.6 919,773.7 919,777.7 862,776.6" fill="#c6c6c4"/>
<polygon points="855,780.5 892,781.2 892,835.2 855,834.5" fill="#2c2422"/>
<line x1="861.2" y1="781.6" x2="861.2" y2="833.6" stroke="#c9c7c4" stroke-width="1"/>
<line x1="867.3" y1="781.7" x2="867.3" y2="833.7" stroke="#c9c7c4" stroke-width="1"/>
<line x1="873.5" y1="781.8" x2="873.5" y2="833.8" stroke="#c9c7c4" stroke-width="1"/>
<line x1="879.7" y1="782" x2="879.7" y2="834" stroke="#c9c7c4" stroke-width="1"/>
<line x1="885.8" y1="782.1" x2="885.8" y2="834.1" stroke="#c9c7c4" stroke-width="1"/>
<polygon points="827,783 855,783.5 855,820.5 827,820" fill="#1d1c1c"/>
<polygon points="829,785 840,785.2 840,818.2 829,818" fill="#5c5652"/>
<polygon points="842,785.2 853,785.5 853,818.5 842,818.2" fill="#8a8480"/>
<polygon points="848.3,785.4 852,785.4 852,818.4 848.3,818.4" fill="#a7a19d"/>
<polygon points="893,784.2 922,784.8 922,821.8 893,821.2" fill="#1d1c1c"/>
<polygon points="895,786.3 906.5,786.5 906.5,819.5 895,819.3" fill="#5c5652"/>
<polygon points="908.5,786.5 920,786.7 920,819.7 908.5,819.5" fill="#8a8480"/>
<polygon points="915,786.6 919,786.7 919,819.7 915,819.6" fill="#a7a19d"/>
<polygon points="854,842.5 922,843.8 922,854.8 854,853.5" fill="#2a2a2a"/>
<polygon points="856,843.5 921,844.7 921,848.7 856,847.5" fill="#cfcfcd"/>
<polygon points="862,848.6 919,849.7 919,853.7 862,852.6" fill="#c6c6c4"/>
<polygon points="1010,400.4 1025,400.7 1025,458.7 1010,458.4" fill="#2c2422"/>
<line x1="1015" y1="401.5" x2="1015" y2="457.5" stroke="#c9c7c4" stroke-width="1"/>
<line x1="1020" y1="401.6" x2="1020" y2="457.6" stroke="#c9c7c4" stroke-width="1"/>
<polygon points="1054,401.3 1092,402 1092,460 1054,459.3" fill="#2c2422"/>
<line x1="1060.3" y1="402.4" x2="1060.3" y2="458.4" stroke="#c9c7c4" stroke-width="1"/>
<line x1="1066.7" y1="402.5" x2="1066.7" y2="458.5" stroke="#c9c7c4" stroke-width="1"/>
<line x1="1073" y1="402.6" x2="1073" y2="458.6" stroke="#c9c7c4" stroke-width="1"/>
<line x1="1079.3" y1="402.8" x2="1079.3" y2="458.8" stroke="#c9c7c4" stroke-width="1"/>
<line x1="1085.7" y1="402.9" x2="1085.7" y2="458.9" stroke="#c9c7c4" stroke-width="1"/>
<polygon points="1025,408.7 1054,409.3 1054,447.3 1025,446.7" fill="#1d1c1c"/>
<polygon points="1027,410.8 1038.5,411 1038.5,445 1027,444.8" fill="#5c5652"/>
<polygon points="1040.5,411 1052,411.2 1052,445.2 1040.5,445" fill="#8a8480"/>
<polygon points="1047,411.1 1051,411.2 1051,445.2 1047,445.1" fill="#a7a19d"/>
<polygon points="1093,410 1122,410.6 1122,448.6 1093,448" fill="#1d1c1c"/>
<polygon points="1095,412.1 1106.5,412.3 1106.5,446.3 1095,446.1" fill="#5c5652"/>
<polygon points="1108.5,412.3 1120,412.5 1120,446.5 1108.5,446.3" fill="#8a8480"/>
<polygon points="1115,412.4 1119,412.5 1119,446.5 1115,446.4" fill="#a7a19d"/>
<polygon points="1003,466.3 1083,467.8 1083,478.8 1003,477.3" fill="#2a2a2a"/>
<polygon points="1005,467.3 1082,468.8 1082,472.8 1005,471.3" fill="#cfcfcd"/>
<polygon points="1011,472.5 1080,473.8 1080,477.8 1011,476.5" fill="#c6c6c4"/>
<polygon points="1010,481.4 1025,481.7 1025,534.7 1010,534.4" fill="#2c2422"/>
<line x1="1015" y1="482.5" x2="1015" y2="533.5" stroke="#6f6663" stroke-width="1"/>
<line x1="1020" y1="482.6" x2="1020" y2="533.6" stroke="#6f6663" stroke-width="1"/>
<polygon points="1054,482.3 1092,483 1092,536 1054,535.3" fill="#2c2422"/>
<line x1="1060.3" y1="483.4" x2="1060.3" y2="534.4" stroke="#6f6663" stroke-width="1"/>
<line x1="1066.7" y1="483.5" x2="1066.7" y2="534.5" stroke="#6f6663" stroke-width="1"/>
<line x1="1073" y1="483.6" x2="1073" y2="534.6" stroke="#6f6663" stroke-width="1"/>
<line x1="1079.3" y1="483.8" x2="1079.3" y2="534.8" stroke="#6f6663" stroke-width="1"/>
<line x1="1085.7" y1="483.9" x2="1085.7" y2="534.9" stroke="#6f6663" stroke-width="1"/>
<polygon points="1025,484.7 1054,485.3 1054,522.3 1025,521.7" fill="#1d1c1c"/>
<polygon points="1027,486.8 1038.5,487 1038.5,520 1027,519.8" fill="#5c5652"/>
<polygon points="1040.5,487 1052,487.2 1052,520.2 1040.5,520" fill="#8a8480"/>
<polygon points="1047,487.1 1051,487.2 1051,520.2 1047,520.1" fill="#a7a19d"/>
<polygon points="1093,486 1122,486.6 1122,523.6 1093,523" fill="#1d1c1c"/>
<polygon points="1095,488.1 1106.5,488.3 1106.5,521.3 1095,521.1" fill="#5c5652"/>
<polygon points="1108.5,488.3 1120,488.5 1120,521.5 1108.5,521.3" fill="#8a8480"/>
<polygon points="1115,488.4 1119,488.5 1119,521.5 1115,521.4" fill="#a7a19d"/>
<polygon points="1003,542.3 1083,543.8 1083,554.8 1003,553.3" fill="#2a2a2a"/>
<polygon points="1005,543.3 1082,544.8 1082,548.8 1005,547.3" fill="#cfcfcd"/>
<polygon points="1011,548.5 1080,549.8 1080,553.8 1011,552.5" fill="#c6c6c4"/>
<polygon points="1010,557.4 1025,557.7 1025,610.7 1010,610.4" fill="#2c2422"/>
<line x1="1015" y1="558.5" x2="1015" y2="609.5" stroke="#6f6663" stroke-width="1"/>
<line x1="1020" y1="558.6" x2="1020" y2="609.6" stroke="#6f6663" stroke-width="1"/>
<polygon points="1054,558.3 1092,559 1092,612 1054,611.3" fill="#2c2422"/>
<line x1="1060.3" y1="559.4" x2="1060.3" y2="610.4" stroke="#6f6663" stroke-width="1"/>
<line x1="1066.7" y1="559.5" x2="1066.7" y2="610.5" stroke="#6f6663" stroke-width="1"/>
<line x1="1073" y1="559.6" x2="1073" y2="610.6" stroke="#6f6663" stroke-width="1"/>
<line x1="1079.3" y1="559.8" x2="1079.3" y2="610.8" stroke="#6f6663" stroke-width="1"/>
<line x1="1085.7" y1="559.9" x2="1085.7" y2="610.9" stroke="#6f6663" stroke-width="1"/>
<polygon points="1025,560.7 1054,561.3 1054,598.3 1025,597.7" fill="#1d1c1c"/>
<polygon points="1027,562.8 1038.5,563 1038.5,596 1027,595.8" fill="#5c5652"/>
<polygon points="1040.5,563 1052,563.2 1052,596.2 1040.5,596" fill="#8a8480"/>
<polygon points="1047,563.1 1051,563.2 1051,596.2 1047,596.1" fill="#a7a19d"/>
<polygon points="1093,562 1122,562.6 1122,599.6 1093,599" fill="#1d1c1c"/>
<polygon points="1095,564.1 1106.5,564.3 1106.5,597.3 1095,597.1" fill="#5c5652"/>
<polygon points="1108.5,564.3 1120,564.5 1120,597.5 1108.5,597.3" fill="#8a8480"/>
<polygon points="1115,564.4 1119,564.5 1119,597.5 1115,597.4" fill="#a7a19d"/>
<polygon points="1003,618.3 1083,619.8 1083,630.8 1003,629.3" fill="#2a2a2a"/>
<polygon points="1005,619.3 1082,620.8 1082,624.8 1005,623.3" fill="#cfcfcd"/>
<polygon points="1011,624.5 1080,625.8 1080,629.8 1011,628.5" fill="#c6c6c4"/>
<polygon points="1010,631.4 1025,631.7 1025,686.7 1010,686.4" fill="#2c2422"/>
<line x1="1015" y1="632.5" x2="1015" y2="685.5" stroke="#6f6663" stroke-width="1"/>
<line x1="1020" y1="632.6" x2="1020" y2="685.6" stroke="#6f6663" stroke-width="1"/>
<polygon points="1054,632.3 1092,633 1092,688 1054,687.3" fill="#2c2422"/>
<line x1="1060.3" y1="633.4" x2="1060.3" y2="686.4" stroke="#6f6663" stroke-width="1"/>
<line x1="1066.7" y1="633.5" x2="1066.7" y2="686.5" stroke="#6f6663" stroke-width="1"/>
<line x1="1073" y1="633.6" x2="1073" y2="686.6" stroke="#6f6663" stroke-width="1"/>
<line x1="1079.3" y1="633.8" x2="1079.3" y2="686.8" stroke="#6f6663" stroke-width="1"/>
<line x1="1085.7" y1="633.9" x2="1085.7" y2="686.9" stroke="#6f6663" stroke-width="1"/>
<polygon points="1025,634.7 1054,635.3 1054,672.3 1025,671.7" fill="#1d1c1c"/>
<polygon points="1027,636.8 1038.5,637 1038.5,670 1027,669.8" fill="#5c5652"/>
<polygon points="1040.5,637 1052,637.2 1052,670.2 1040.5,670" fill="#8a8480"/>
<polygon points="1047,637.1 1051,637.2 1051,670.2 1047,670.1" fill="#a7a19d"/>
<polygon points="1093,636 1122,636.6 1122,673.6 1093,673" fill="#1d1c1c"/>
<polygon points="1095,638.1 1106.5,638.3 1106.5,671.3 1095,671.1" fill="#5c5652"/>
<polygon points="1108.5,638.3 1120,638.5 1120,671.5 1108.5,671.3" fill="#8a8480"/>
<polygon points="1115,638.4 1119,638.5 1119,671.5 1115,671.4" fill="#a7a19d"/>
<polygon points="1003,694.3 1083,695.8 1083,706.8 1003,705.3" fill="#2a2a2a"/>
<polygon points="1005,695.3 1082,696.8 1082,700.8 1005,699.3" fill="#cfcfcd"/>
<polygon points="1011,700.5 1080,701.8 1080,705.8 1011,704.5" fill="#c6c6c4"/>
<polygon points="1010,708.4 1025,708.7 1025,761.7 1010,761.4" fill="#2c2422"/>
<line x1="1015" y1="709.5" x2="1015" y2="760.5" stroke="#c9c7c4" stroke-width="1"/>
<line x1="1020" y1="709.6" x2="1020" y2="760.6" stroke="#c9c7c4" stroke-width="1"/>
<polygon points="1054,709.3 1092,710 1092,763 1054,762.3" fill="#2c2422"/>
<line x1="1060.3" y1="710.4" x2="1060.3" y2="761.4" stroke="#c9c7c4" stroke-width="1"/>
<line x1="1066.7" y1="710.5" x2="1066.7" y2="761.5" stroke="#c9c7c4" stroke-width="1"/>
<line x1="1073" y1="710.6" x2="1073" y2="761.6" stroke="#c9c7c4" stroke-width="1"/>
<line x1="1079.3" y1="710.8" x2="1079.3" y2="761.8" stroke="#c9c7c4" stroke-width="1"/>
<line x1="1085.7" y1="710.9" x2="1085.7" y2="761.9" stroke="#c9c7c4" stroke-width="1"/>
<polygon points="1025,711.7 1054,712.3 1054,749.3 1025,748.7" fill="#1d1c1c"/>
<polygon points="1027,713.8 1038.5,714 1038.5,747 1027,746.8" fill="#5c5652"/>
<polygon points="1040.5,714 1052,714.2 1052,747.2 1040.5,747" fill="#8a8480"/>
<polygon points="1047,714.1 1051,714.2 1051,747.2 1047,747.1" fill="#a7a19d"/>
<polygon points="1093,713 1122,713.6 1122,750.6 1093,750" fill="#1d1c1c"/>
<polygon points="1095,715.1 1106.5,715.3 1106.5,748.3 1095,748.1" fill="#5c5652"/>
<polygon points="1108.5,715.3 1120,715.5 1120,748.5 1108.5,748.3" fill="#8a8480"/>
<polygon points="1115,715.4 1119,715.5 1119,748.5 1115,748.4" fill="#a7a19d"/>
<polygon points="1003,769.3 1083,770.8 1083,781.8 1003,780.3" fill="#2a2a2a"/>
<polygon points="1005,770.3 1082,771.8 1082,775.8 1005,774.3" fill="#cfcfcd"/>
<polygon points="1011,775.5 1080,776.8 1080,780.8 1011,779.5" fill="#c6c6c4"/>
<polygon points="1010,783.4 1025,783.7 1025,837.7 1010,837.4" fill="#2c2422"/>
<line x1="1015" y1="784.5" x2="1015" y2="836.5" stroke="#c9c7c4" stroke-width="1"/>
<line x1="1020" y1="784.6" x2="1020" y2="836.6" stroke="#c9c7c4" stroke-width="1"/>
<polygon points="1054,784.3 1092,785 1092,839 1054,838.3" fill="#2c2422"/>
<line x1="1060.3" y1="785.4" x2="1060.3" y2="837.4" stroke="#c9c7c4" stroke-width="1"/>
<line x1="1066.7" y1="785.5" x2="1066.7" y2="837.5" stroke="#c9c7c4" stroke-width="1"/>
<line x1="1073" y1="785.6" x2="1073" y2="837.6" stroke="#c9c7c4" stroke-width="1"/>
<line x1="1079.3" y1="785.8" x2="1079.3" y2="837.8" stroke="#c9c7c4" stroke-width="1"/>
<line x1="1085.7" y1="785.9" x2="1085.7" y2="837.9" stroke="#c9c7c4" stroke-width="1"/>
<polygon points="1025,786.7 1054,787.3 1054,824.3 1025,823.7" fill="#1d1c1c"/>
<polygon points="1027,788.8 1038.5,789 1038.5,822 1027,821.8" fill="#5c5652"/>
<polygon points="1040.5,789 1052,789.2 1052,822.2 1040.5,822" fill="#8a8480"/>
<polygon points="1047,789.1 1051,789.2 1051,822.2 1047,822.1" fill="#a7a19d"/>
<polygon points="1093,788 1122,788.6 1122,825.6 1093,825" fill="#1d1c1c"/>
<polygon points="1095,790.1 1106.5,790.3 1106.5,823.3 1095,823.1" fill="#5c5652"/>
<polygon points="1108.5,790.3 1120,790.5 1120,823.5 1108.5,823.3" fill="#8a8480"/>
<polygon points="1115,790.4 1119,790.5 1119,823.5 1115,823.4" fill="#a7a19d"/>
<polygon points="1003,845.3 1083,846.8 1083,857.8 1003,856.3" fill="#2a2a2a"/>
<polygon points="1005,846.3 1082,847.8 1082,851.8 1005,850.3" fill="#cfcfcd"/>
<polygon points="1011,851.5 1080,852.8 1080,856.8 1011,855.5" fill="#c6c6c4"/>
<polygon points="555,360.8 580,361.3 580,396.3 555,395.8" fill="#1d1c1c"/>
<polygon points="557,362.8 566.5,363 566.5,394 557,393.8" fill="#5c5652"/>
<polygon points="568.5,363 578,363.2 578,394.2 568.5,394" fill="#8a8480"/>
<polygon points="574.1,363.2 577,363.2 577,394.2 574.1,394.2" fill="#a7a19d"/>
<polygon points="555,434.8 580,435.3 580,473.3 555,472.8" fill="#1d1c1c"/>
<polygon points="558,437.4 566.5,437.5 566.5,471 558,470.9" fill="#5b5551"/>
<polygon points="568.5,437.5 578,437.7 578,471.2 568.5,471" fill="#5b5551"/>
<polygon points="570.5,460.1 578,460.2 578,463.2 570.5,463.1" fill="#cfcbc8"/>
<polygon points="569.5,465.1 578,465.2 578,468.2 569.5,468.1" fill="#c9c5c2"/>
<polygon points="558,460.9 566.5,461 566.5,462 558,461.9" fill="#8f8a86"/>
<polygon points="555,510.8 580,511.3 580,549.3 555,548.8" fill="#1d1c1c"/>
<polygon points="558,513.4 566.5,513.5 566.5,547 558,546.9" fill="#5b5551"/>
<polygon points="568.5,513.5 578,513.7 578,547.2 568.5,547" fill="#5b5551"/>
<polygon points="570.5,536.1 578,536.2 578,539.2 570.5,539.1" fill="#cfcbc8"/>
<polygon points="569.5,541.1 578,541.2 578,544.2 569.5,544.1" fill="#c9c5c2"/>
<polygon points="558,536.9 566.5,537 566.5,538 558,537.9" fill="#8f8a86"/>
<polygon points="555,586.8 580,587.3 580,623.3 555,622.8" fill="#1d1c1c"/>
<polygon points="558,589.4 566.5,589.5 566.5,621 558,620.9" fill="#5b5551"/>
<polygon points="568.5,589.5 578,589.7 578,621.2 568.5,621" fill="#5b5551"/>
<polygon points="570.5,610.1 578,610.2 578,613.2 570.5,613.1" fill="#cfcbc8"/>
<polygon points="569.5,615.1 578,615.2 578,618.2 569.5,618.1" fill="#c9c5c2"/>
<polygon points="558,610.9 566.5,611 566.5,612 558,611.9" fill="#8f8a86"/>
<polygon points="555,662.8 580,663.3 580,700.3 555,699.8" fill="#1d1c1c"/>
<polygon points="558,665.4 566.5,665.5 566.5,698 558,697.9" fill="#5b5551"/>
<polygon points="568.5,665.5 578,665.7 578,698.2 568.5,698" fill="#5b5551"/>
<polygon points="570.5,687.1 578,687.2 578,690.2 570.5,690.1" fill="#cfcbc8"/>
<polygon points="569.5,692.1 578,692.2 578,695.2 569.5,695.1" fill="#c9c5c2"/>
<polygon points="558,687.9 566.5,688 566.5,689 558,688.9" fill="#8f8a86"/>
<polygon points="950,368.3 974,368.8 974,403.8 950,403.3" fill="#1d1c1c"/>
<polygon points="952,370.3 961,370.5 961,401.5 952,401.3" fill="#5c5652"/>
<polygon points="963,370.5 972,370.7 972,401.7 963,401.5" fill="#8a8480"/>
<polygon points="968.4,370.6 971,370.7 971,401.7 968.4,401.6" fill="#a7a19d"/>
<polygon points="950,442.3 974,442.8 974,480.8 950,480.3" fill="#1d1c1c"/>
<polygon points="953,444.9 961,445 961,478.5 953,478.4" fill="#5b5551"/>
<polygon points="963,445 972,445.2 972,478.7 963,478.5" fill="#5b5551"/>
<polygon points="965,467.6 972,467.7 972,470.7 965,470.6" fill="#cfcbc8"/>
<polygon points="964,472.6 972,472.7 972,475.7 964,475.6" fill="#c9c5c2"/>
<polygon points="953,468.4 961,468.5 961,469.5 953,469.4" fill="#8f8a86"/>
<polygon points="950,518.3 974,518.8 974,556.8 950,556.3" fill="#1d1c1c"/>
<polygon points="953,520.9 961,521 961,554.5 953,554.4" fill="#5b5551"/>
<polygon points="963,521 972,521.2 972,554.7 963,554.5" fill="#5b5551"/>
<polygon points="965,543.6 972,543.7 972,546.7 965,546.6" fill="#cfcbc8"/>
<polygon points="964,548.6 972,548.7 972,551.7 964,551.6" fill="#c9c5c2"/>
<polygon points="953,544.4 961,544.5 961,545.5 953,545.4" fill="#8f8a86"/>
<polygon points="950,594.3 974,594.8 974,630.8 950,630.3" fill="#1d1c1c"/>
<polygon points="953,596.9 961,597 961,628.5 953,628.4" fill="#5b5551"/>
<polygon points="963,597 972,597.2 972,628.7 963,628.5" fill="#5b5551"/>
<polygon points="965,617.6 972,617.7 972,620.7 965,620.6" fill="#cfcbc8"/>
<polygon points="964,622.6 972,622.7 972,625.7 964,625.6" fill="#c9c5c2"/>
<polygon points="953,618.4 961,618.5 961,619.5 953,619.4" fill="#8f8a86"/>
<polygon points="950,670.3 974,670.8 974,707.8 950,707.3" fill="#1d1c1c"/>
<polygon points="953,672.9 961,673 961,705.5 953,705.4" fill="#5b5551"/>
<polygon points="963,673 972,673.2 972,705.7 963,705.5" fill="#5b5551"/>
<polygon points="965,694.6 972,694.7 972,697.7 965,697.6" fill="#cfcbc8"/>
<polygon points="964,699.6 972,699.7 972,702.7 964,702.6" fill="#c9c5c2"/>
<polygon points="953,695.4 961,695.5 961,696.5 953,696.4" fill="#8f8a86"/>
<polygon points="795,404.4 800,404.4 800,441.4 795,441.4" fill="#1e1e1e"/>
<polygon points="797,406.4 799,406.4 799,439.4 797,439.4" fill="#5e5e5e"/>
<polygon points="795,480.4 800,480.4 800,517.4 795,517.4" fill="#1e1e1e"/>
<polygon points="797,482.4 799,482.4 799,515.4 797,515.4" fill="#5e5e5e"/>
<polygon points="795,556.4 800,556.4 800,593.4 795,593.4" fill="#1e1e1e"/>
<polygon points="797,558.4 799,558.4 799,591.4 797,591.4" fill="#5e5e5e"/>
<polygon points="795,630.4 800,630.4 800,667.4 795,667.4" fill="#1e1e1e"/>
<polygon points="797,632.4 799,632.4 799,665.4 797,665.4" fill="#5e5e5e"/>
<polygon points="795,707.4 800,707.4 800,744.4 795,744.4" fill="#1e1e1e"/>
<polygon points="797,709.4 799,709.4 799,742.4 797,742.4" fill="#5e5e5e"/>
<polygon points="795,782.4 800,782.4 800,819.4 795,819.4" fill="#1e1e1e"/>
<polygon points="797,784.4 799,784.4 799,817.4 797,817.4" fill="#5e5e5e"/>
<polygon points="1188,408.1 1196,407.5 1196,444.5 1188,445.1" fill="#1e1e1e"/>
<polygon points="1190,409.9 1195,409.6 1195,442.6 1190,442.9" fill="#5e5e5e"/>
<polygon points="1188,484.1 1196,483.5 1196,520.5 1188,521.1" fill="#1e1e1e"/>
<polygon points="1190,485.9 1195,485.6 1195,518.6 1190,518.9" fill="#5e5e5e"/>
<polygon points="1188,560.1 1196,559.5 1196,596.5 1188,597.1" fill="#1e1e1e"/>
<polygon points="1190,561.9 1195,561.6 1195,594.6 1190,594.9" fill="#5e5e5e"/>
<polygon points="1188,634.1 1196,633.5 1196,670.5 1188,671.1" fill="#1e1e1e"/>
<polygon points="1190,635.9 1195,635.6 1195,668.6 1190,668.9" fill="#5e5e5e"/>
<polygon points="1188,711.1 1196,710.5 1196,747.5 1188,748.1" fill="#1e1e1e"/>
<polygon points="1190,712.9 1195,712.6 1195,745.6 1190,745.9" fill="#5e5e5e"/>
<polygon points="1188,786.1 1196,785.5 1196,822.5 1188,823.1" fill="#1e1e1e"/>
<polygon points="1190,787.9 1195,787.6 1195,820.6 1190,820.9" fill="#5e5e5e"/>
<polygon points="1212,406.4 1228,405.3 1228,442.3 1212,443.4" fill="#1e1e1e"/>
<polygon points="1214,408.2 1226,407.4 1226,440.4 1214,441.2" fill="#a29d99"/>
<polygon points="1212,482.4 1228,481.3 1228,518.3 1212,519.4" fill="#1e1e1e"/>
<polygon points="1214,484.2 1226,483.4 1226,516.4 1214,517.2" fill="#6c6561"/>
<polygon points="1212,558.4 1228,557.3 1228,594.3 1212,595.4" fill="#1e1e1e"/>
<polygon points="1214,560.2 1226,559.4 1226,592.4 1214,593.2" fill="#6c6561"/>
<polygon points="1212,632.4 1228,631.3 1228,668.3 1212,669.4" fill="#1e1e1e"/>
<polygon points="1214,634.2 1226,633.4 1226,666.4 1214,667.2" fill="#6c6561"/>
<polygon points="1212,709.4 1228,708.3 1228,745.3 1212,746.4" fill="#1e1e1e"/>
<polygon points="1214,711.2 1226,710.4 1226,743.4 1214,744.2" fill="#a29d99"/>
<polygon points="1212,784.4 1228,783.3 1228,820.3 1212,821.4" fill="#1e1e1e"/>
<polygon points="1214,786.2 1226,785.4 1226,818.4 1214,819.2" fill="#a29d99"/>
<polygon points="365,375 408,368 445,361 531,351 531,370 408,370" fill="#585858"/>
<polyline points="365,375 408,368 445,361 531,351" fill="none" stroke="#111" stroke-width="2"/>
<polygon points="408,367 531,367 531,375 408,375" fill="#b3b3b1"/>
<line x1="408" y1="367" x2="531" y2="367" stroke="#151515" stroke-width="1.6"/>
<polygon points="365,375 531,375 531,377 365,377" fill="#1c1c1c"/>
<polygon points="365,377 531,377 531,385 365,385" fill="#b8b8b6"/>
<polygon points="365,385 531,385 531,391 371,391" fill="#232323"/>
<line x1="385" y1="376.0" x2="527" y2="376.0" stroke="#9a9a98" stroke-width="0.9" stroke-dasharray="12 14"/>
<line x1="387" y1="387.5" x2="527" y2="387.5" stroke="#8a8a88" stroke-width="0.9" stroke-dasharray="12 30"/>
<polygon points="618,371 752,371 752,380 618,380" fill="#b3b3b1"/>
<line x1="618" y1="371" x2="752" y2="371" stroke="#151515" stroke-width="1.6"/>
<polygon points="603,380 801,380 801,381 603,381" fill="#1c1c1c"/>
<polygon points="603,381 801,381 801,389 603,389" fill="#b8b8b6"/>
<polygon points="603,389 801,389 801,394 609,394" fill="#232323"/>
<line x1="623" y1="380.5" x2="797" y2="380.5" stroke="#9a9a98" stroke-width="0.9" stroke-dasharray="12 14"/>
<line x1="625" y1="391.5" x2="797" y2="391.5" stroke="#8a8a88" stroke-width="0.9" stroke-dasharray="12 30"/>
<polygon points="752,370 871,367 871,381 752,381" fill="#575757"/>
<polygon points="802,375 924,375 924,384 802,384" fill="#b3b3b1"/>
<line x1="802" y1="375" x2="924" y2="375" stroke="#151515" stroke-width="1.6"/>
<polygon points="800,384 924,384 924,385 800,385" fill="#1c1c1c"/>
<polygon points="800,385 924,385 924,393 800,393" fill="#b8b8b6"/>
<polygon points="800,393 924,393 924,399 806,399" fill="#232323"/>
<line x1="820" y1="384.5" x2="920" y2="384.5" stroke="#9a9a98" stroke-width="0.9" stroke-dasharray="12 14"/>
<line x1="822" y1="395.5" x2="920" y2="395.5" stroke="#8a8a88" stroke-width="0.9" stroke-dasharray="12 30"/>
<polygon points="998,378 1147,378 1147,387 998,387" fill="#b3b3b1"/>
<line x1="998" y1="378" x2="1147" y2="378" stroke="#151515" stroke-width="1.6"/>
<polygon points="998,387 1162,387 1162,388 998,388" fill="#1c1c1c"/>
<polygon points="998,388 1162,388 1162,396 998,396" fill="#b8b8b6"/>
<polygon points="998,396 1162,396 1162,401 1004,401" fill="#232323"/>
<line x1="1018" y1="387.5" x2="1158" y2="387.5" stroke="#9a9a98" stroke-width="0.9" stroke-dasharray="12 14"/>
<line x1="1020" y1="398.5" x2="1158" y2="398.5" stroke="#8a8a88" stroke-width="0.9" stroke-dasharray="12 30"/>
<polygon points="1111,363 1346,365 1346,380 1111,380" fill="#b3b3b1"/>
<polyline points="1111,363 1346,365" stroke="#1e1e1e" stroke-width="1.5"/>
<polygon points="1198,363 1213,363 1213,378 1198,378" fill="#4e4e4e"/>
<polygon points="1146,379 1346,364 1346,375 1146,389" fill="#4a4a4a" stroke="#1c1c1c" stroke-width="1"/>
<polygon points="1209,375 1235,373 1235,383 1209,385" fill="#b0b0ae"/>
<polygon points="1161,389 1389,372 1389,384 1161,402" fill="#474747" stroke="#1c1c1c" stroke-width="1"/>
<polygon points="1224,386 1250,384 1250,394 1224,396" fill="#b0b0ae"/>
<line x1="1165" y1="395" x2="1386" y2="378" stroke="#777" stroke-width="0.8" stroke-dasharray="7 6"/>
<line x1="1150" y1="383" x2="1343" y2="369" stroke="#777" stroke-width="0.8" stroke-dasharray="7 6"/>
<polygon points="433,723 644,719 644,735 433,738" fill="#4a423e"/>
<polygon points="435,725 642,722 642,727 435,730" fill="#6f6761"/>
<polygon points="441,731 636,728 636,733 441,736" fill="#5e5651"/>
<polyline points="433,723 644,719" stroke="#1a1614" stroke-width="2"/>
<polyline points="435,730.5 642,727.5" stroke="#221d1b" stroke-width="1"/>
<polyline points="441,737 636,734" stroke="#1a1614" stroke-width="1.5"/>
<polygon points="446,738 588,738 588,851 446,851" fill="#7b716b" stroke="#2a2422" stroke-width="1"/>
<polygon points="588,737 631,735 631,848 588,851" fill="#3b3330" stroke="#1c1816" stroke-width="1"/>
<line x1="612" y1="755" x2="612" y2="849" stroke="#1a1614" stroke-width="1.5"/>
<line x1="619" y1="753" x2="619" y2="849" stroke="#6b625d" stroke-width="1"/>
<polygon points="466,755 570,755 570,849 466,849" fill="#6e655f" stroke="#221d1b" stroke-width="1"/>
<polygon points="471,762 565,762 565,849 471,849" fill="#807770" stroke="#3a3330" stroke-width="1"/>
<polygon points="484,770 561,770 561,847 484,847" fill="#a7a4a1" stroke="#1e1e1e" stroke-width="1.5"/>
<polygon points="487,772 498,772 498,845 487,845" fill="#777371"/>
<polygon points="512,772 534,772 534,845 512,845" fill="#8e8a87"/>
<line x1="505" y1="770" x2="505" y2="847" stroke="#1e1e1e" stroke-width="1.5"/>
<line x1="530" y1="770" x2="530" y2="847" stroke="#1e1e1e" stroke-width="1.5"/>
<line x1="546" y1="770" x2="546" y2="847" stroke="#1e1e1e" stroke-width="1.5"/>
<polygon points="557,782 560,782 560,788 557,788" fill="#c9c6c3"/>
<polygon points="553,790 560,790 560,796 553,796" fill="#c9c6c3"/>
<polygon points="549,798 560,798 560,804 549,804" fill="#c9c6c3"/>
<polygon points="545,806 560,806 560,812 545,812" fill="#c9c6c3"/>
<polygon points="541,814 560,814 560,820 541,820" fill="#c9c6c3"/>
<polygon points="537,822 560,822 560,828 537,828" fill="#c9c6c3"/>
<polygon points="533,830 560,830 560,836 533,836" fill="#c9c6c3"/>
<polygon points="529,838 560,838 560,844 529,844" fill="#c9c6c3"/>
<polygon points="525,846 560,846 560,852 525,852" fill="#c9c6c3"/>
<polygon points="451,848 608,848 608,852 451,852" fill="#2b2523"/>
<polygon points="801,704 839,704 839,757 801,757" fill="#7a706a" stroke="#2a2422" stroke-width="1"/>
<polygon points="827,731 1038,727 1038,743 827,746" fill="#4a423e"/>
<polygon points="829,733 1036,730 1036,735 829,738" fill="#6f6761"/>
<polygon points="835,739 1030,736 1030,741 835,744" fill="#5e5651"/>
<polyline points="827,731 1038,727" stroke="#1a1614" stroke-width="2"/>
<polyline points="829,738.5 1036,735.5" stroke="#221d1b" stroke-width="1"/>
<polyline points="835,745 1030,742" stroke="#1a1614" stroke-width="1.5"/>
<polygon points="840,746 982,746 982,859 840,859" fill="#7b716b" stroke="#2a2422" stroke-width="1"/>
<polygon points="982,745 1025,743 1025,856 982,859" fill="#3b3330" stroke="#1c1816" stroke-width="1"/>
<line x1="1006" y1="763" x2="1006" y2="857" stroke="#1a1614" stroke-width="1.5"/>
<line x1="1013" y1="761" x2="1013" y2="857" stroke="#6b625d" stroke-width="1"/>
<polygon points="860,763 964,763 964,857 860,857" fill="#6e655f" stroke="#221d1b" stroke-width="1"/>
<polygon points="865,770 959,770 959,857 865,857" fill="#807770" stroke="#3a3330" stroke-width="1"/>
<polygon points="878,778 955,778 955,855 878,855" fill="#a7a4a1" stroke="#1e1e1e" stroke-width="1.5"/>
<polygon points="881,780 892,780 892,853 881,853" fill="#777371"/>
<polygon points="906,780 928,780 928,853 906,853" fill="#8e8a87"/>
<line x1="899" y1="778" x2="899" y2="855" stroke="#1e1e1e" stroke-width="1.5"/>
<line x1="924" y1="778" x2="924" y2="855" stroke="#1e1e1e" stroke-width="1.5"/>
<line x1="940" y1="778" x2="940" y2="855" stroke="#1e1e1e" stroke-width="1.5"/>
<polygon points="951,790 954,790 954,796 951,796" fill="#c9c6c3"/>
<polygon points="947,798 954,798 954,804 947,804" fill="#c9c6c3"/>
<polygon points="943,806 954,806 954,812 943,812" fill="#c9c6c3"/>
<polygon points="939,814 954,814 954,820 939,820" fill="#c9c6c3"/>
<polygon points="935,822 954,822 954,828 935,828" fill="#c9c6c3"/>
<polygon points="931,830 954,830 954,836 931,836" fill="#c9c6c3"/>
<polygon points="927,838 954,838 954,844 927,844" fill="#c9c6c3"/>
<polygon points="923,846 954,846 954,852 923,852" fill="#c9c6c3"/>
<polygon points="919,854 954,854 954,860 919,860" fill="#c9c6c3"/>
<polygon points="845,856 1002,856 1002,860 845,860" fill="#2b2523"/>
</g></svg><!-- view cube house -->
<svg style="left:1405px;top:238px" width="95" height="78" viewBox="1405 238 95 78">
<path d="M1414 267 H1473 V311.5 L1414 307Z" fill="#d3d3d3" stroke="#6a6c6e" stroke-width="0.8"/>
<path d="M1473 267 L1492 266 V304.5 L1473 311.5Z" fill="#d6d6d6" stroke="#6a6c6e" stroke-width="0.8"/>
<rect x="1480" y="275" width="6" height="17" fill="#a5aab2"/>
<path d="M1409 267.4 L1430.4 243 H1476.2 L1495.6 266.5Z" fill="#a6abb2" stroke="#63666a" stroke-width="0.9" stroke-linejoin="round"/>
<path d="M1467 243 L1474.5 267" stroke="#63666a" stroke-width="0.8"/>
</svg>
<!-- axis gizmo -->
<svg style="left:205px;top:958px" width="55" height="58" viewBox="205 958 55 58">
<path d="M244 964.8 H251 L243.5 975.2 H251" fill="none" stroke="#1010f0" stroke-width="1.4"/>
<rect x="245" y="986" width="4.5" height="18" fill="#0a0ae6"/>
<path d="M241.8 987.5 L247 977 L252.3 987.5Z" fill="#0a0ae6"/>
<rect x="243" y="1002" width="9" height="8" fill="#c4c4c4"/>
<rect x="249.5" y="1002" width="2.5" height="8" fill="#7a7a7a"/>
<path d="M220 1005.5 L231 1000.5 V1011Z" fill="#b80000"/>
<path d="M228 1000 L234 1004 V1007.5 L229 1011Z" fill="#ff1010"/>
<path d="M210.5 1000 L218 1011 M218 1000 L210.5 1011" stroke="#ff1a1a" stroke-width="1.3"/>
<circle cx="239.5" cy="1006" r="4.3" fill="#00d000"/>
<circle cx="245" cy="1006" r="2" fill="#10c010"/>
<path d="M228.3 1001 L231.8 1006.5 L235 1001 M231.8 1006.5 V1013" fill="none" stroke="#22ee22" stroke-width="1.4"/>
</svg>
<!-- dropdown menu -->
<div class="a" style="left:901px;top:116px;width:125px;height:71px;background:#f6f7f9;border:1px solid #d9dee6"></div>
<div class="a" style="left:902px;top:151px;width:123px;height:32px;background:#dee3ea"></div>
<svg style="left:906px;top:124px" width="26" height="22" viewBox="0 0 26 22">
<rect x="2.5" y="1.5" width="17" height="15" fill="#a6bbcd" stroke="#2e4a63" stroke-width="1.2"/>
<path d="M3 11 L7 8 L15 16 H3Z" fill="#d6e0e8" stroke="#2e4a63" stroke-width="1"/>
<circle cx="14.5" cy="6" r="2" fill="#d6e0e8" stroke="#2e4a63" stroke-width="0.9"/>
<rect x="5" y="12.5" width="20" height="9" fill="#f6f7f9"/>
<text x="5.5" y="21" font-family="Liberation Sans" font-size="8.5" font-weight="bold" fill="#2e4a63" textLength="19" lengthAdjust="spacingAndGlyphs">1080P</text>
</svg>
<div class="t" style="left:934px;top:128.5px;font-size:12px;color:#111">高清（<span style="font-size:13.5px">1080P</span>）</div>
<svg style="left:906px;top:156px" width="26" height="22" viewBox="0 0 26 22">
<rect x="2.5" y="1.5" width="17" height="15" fill="#a6bbcd" stroke="#2e4a63" stroke-width="1.2"/>
<path d="M3 11 L7 8 L15 16 H3Z" fill="#d6e0e8" stroke="#2e4a63" stroke-width="1"/>
<circle cx="14.5" cy="6" r="2" fill="#d6e0e8" stroke="#2e4a63" stroke-width="0.9"/>
<rect x="10" y="12.5" width="13" height="9" fill="#dee3ea"/>
<text x="10.5" y="21" font-family="Liberation Sans" font-size="9" fill="#2e4a63">4K</text>
</svg>
<div class="t" style="left:934px;top:160.5px;font-size:12px;color:#111">超高清（<span style="font-size:13.5px">4K</span>）</div>
<!-- red arrow -->
<svg style="left:835px;top:168px" width="80" height="45" viewBox="835 168 80 45">
<path d="M842 204 L893 180" stroke="#e31c1c" stroke-width="3.2" stroke-linecap="round"/>
<path d="M905.5 174.5 L888.5 175.5 L895.5 186.5Z" fill="#e31c1c"/>
</svg>
<!-- right panel -->
<div class="a" style="left:1575px;top:158px;width:342px;height:895px;background:#f9f9fa"></div>
<div class="a" style="left:1914px;top:158px;width:3px;height:895px;background:#f5f6f8;border-left:1px solid #dde2e9"></div>
<div class="a" style="left:1914px;top:158px;width:3px;height:12px;background:#dfe3ea"></div>
<div class="a" style="left:1915px;top:491px;width:2px;height:32px;background:#d5deea"></div>
<div class="a" style="left:1575px;top:163px;width:338px;height:194px;background:#eceff2;border:1px solid #d3d9e2"></div>
<div class="a" style="left:1575px;top:361px;width:338px;height:96px;background:#eceff2;border:1px solid #d3d9e2"></div>
<div class="a" style="left:1575px;top:461px;width:338px;height:591px;background:#eceff2;border:1px solid #d3d9e2"></div>
<div class="t" style="left:1584px;top:171px;font-size:12px;color:#5a6270">通用工具</div>
<div class="t" style="left:1584px;top:369px;font-size:12px;color:#5a6270">编辑点式族</div>
<div class="t" style="left:1584px;top:469px;font-size:12px;color:#3d4652">属性面板</div>
<svg style="left:1598.5px;top:214px" width="22" height="22" viewBox="0 0 22 22"><path d="M11 1 V21 M1 11 H21" stroke="#3d5165" stroke-width="1.1"/><path d="M8 4 L11 1 L14 4 M8 18 L11 21 L14 18 M4 8 L1 11 L4 14 M18 8 L21 11 L18 14" fill="none" stroke="#3d5165" stroke-width="1.1"/><circle cx="11" cy="11" r="1.2" fill="none" stroke="#3d5165"/></svg>
<svg style="left:1636.5px;top:214px" width="22" height="22" viewBox="0 0 22 22"><rect x="4" y="4" width="16" height="16" fill="#8699ac" stroke="#3d5165" stroke-width="1"/><rect x="1.5" y="1.5" width="16" height="16" fill="#fff" stroke="#3d5165" stroke-width="1.2"/><path d="M9.5 5.5 V13.5 M5.5 9.5 H13.5" stroke="#3d5165" stroke-width="1.2"/></svg>
<svg style="left:1675px;top:214px" width="22" height="22" viewBox="0 0 22 22"><path d="M19 13 A8.5 8.5 0 1 1 17 4.5" fill="none" stroke="#3d5165" stroke-width="1.1"/><path d="M16 11 L19 14 L21.5 10.5" fill="none" stroke="#3d5165" stroke-width="1.1"/><path d="M8 11 L11 8 L14 11 L11 14Z" fill="#3d5165"/></svg>
<svg style="left:1713px;top:214px" width="22" height="22" viewBox="0 0 22 22"><path d="M1 9.5 H10.5 V21 H7.5 V12.5 H1Z" fill="#8699ac" stroke="#3d5165" stroke-width="1"/><path d="M9 1 V7 M12 1 V7 M13.5 9 H19.5 M13.5 12 H19.5" stroke="#8699ac" stroke-width="0.9"/></svg>
<svg style="left:1751.5px;top:214px" width="22" height="22" viewBox="0 0 22 22"><rect x="1" y="9" width="9" height="4.5" fill="#8699ac" stroke="#3d5165" stroke-width="0.8"/><rect x="12.5" y="9" width="9" height="4.5" fill="#8699ac" stroke="#3d5165" stroke-width="0.8"/><path d="M11 0.5 V21.5" stroke="#8699ac" stroke-width="1"/></svg>
<svg style="left:1789.5px;top:214px" width="22" height="22" viewBox="0 0 22 22"><rect x="1" y="9" width="7.5" height="4.5" fill="#8699ac" stroke="#3d5165" stroke-width="0.8"/><rect x="14" y="9" width="7.5" height="4.5" fill="#8699ac" stroke="#3d5165" stroke-width="0.8"/><rect x="9" y="0.5" width="4.5" height="21" rx="1" fill="#d4dde5" stroke="#3d5165" stroke-width="1"/></svg>
<svg style="left:1827.5px;top:214px" width="22" height="22" viewBox="0 0 22 22"><path d="M2 2 H10 V6 H15 V15 H6 V10 H2Z" fill="#fff" stroke="#3d5165" stroke-width="1.3"/><path d="M0.5 0.5 H11.5 V4.5 H16.5 V16.5 H4.5 V11.5 H0.5Z" fill="none" stroke="#b9c6d3" stroke-width="1"/></svg>
<svg style="left:1598.5px;top:252.5px" width="22" height="22" viewBox="0 0 22 22"><rect x="6" y="3" width="10" height="6" fill="#8699ac" stroke="#3d5165" stroke-width="1"/><rect x="1" y="12" width="15" height="6" fill="#d4dde5" stroke="#3d5165" stroke-width="1"/><path d="M19.5 0.5 V20.5" stroke="#3d5165" stroke-width="1.2"/></svg>
<svg style="left:1636.5px;top:252.5px" width="22" height="22" viewBox="0 0 22 22"><rect x="1" y="8" width="10" height="5.5" fill="#8699ac" stroke="#3d5165" stroke-width="1"/><path d="M13 8 H17 M13 12.5 H17" stroke="#a4b3c2" stroke-width="1"/><path d="M20 1 V21" stroke="#3d5165" stroke-width="1.2"/></svg>
<svg style="left:1675px;top:252.5px" width="22" height="22" viewBox="0 0 22 22"><rect x="1" y="8.5" width="10" height="5.5" fill="#a9b9c8" stroke="#3d5165" stroke-width="1"/><path d="M14 8 H20 M14 12.5 H20" stroke="#a4b3c2" stroke-width="1"/><path d="M12.5 1 V21" stroke="#3d5165" stroke-width="1.2"/></svg>
<svg style="left:1713px;top:252.5px" width="22" height="22" viewBox="0 0 22 22"><rect x="1" y="15" width="6" height="6" fill="#8699ac" stroke="#3d5165"/><rect x="8" y="8.5" width="6" height="6" fill="#d4dde5" stroke="#3d5165"/><rect x="15" y="1.5" width="6" height="6" fill="#d4dde5" stroke="#3d5165"/></svg>
<svg style="left:1751.5px;top:252.5px" width="22" height="22" viewBox="0 0 22 22"><rect x="8.5" y="1" width="4.5" height="4.5" fill="#d4dde5" stroke="#3d5165" stroke-width="0.9"/><rect x="2" y="6.5" width="4.5" height="4.5" fill="#d4dde5" stroke="#3d5165" stroke-width="0.9"/><rect x="15" y="6.5" width="4.5" height="4.5" fill="#d4dde5" stroke="#3d5165" stroke-width="0.9"/><rect x="2" y="13" width="4.5" height="4.5" fill="#d4dde5" stroke="#3d5165" stroke-width="0.9"/><rect x="15" y="13" width="4.5" height="4.5" fill="#d4dde5" stroke="#3d5165" stroke-width="0.9"/><rect x="8.5" y="17" width="4.5" height="4.5" fill="#8699ac" stroke="#3d5165" stroke-width="0.9"/></svg>
<svg style="left:1789.5px;top:252.5px" width="22" height="22" viewBox="0 0 22 22"><path d="M1.5 4 L8 11 L1.5 18Z" fill="#d4dde5" stroke="#3d5165" stroke-width="1"/><path d="M21 4 L14.5 11 L21 18Z" fill="#8699ac" stroke="#3d5165" stroke-width="1"/><path d="M11 0.5 V21.5" stroke="#8699ac" stroke-width="1"/></svg>
<svg style="left:1827.5px;top:252.5px" width="22" height="22" viewBox="0 0 22 22"><path d="M3.5 6 H18.5 L17.5 21 H4.5Z" fill="#8699ac" stroke="#3d5165" stroke-width="1.2"/><rect x="1" y="3" width="20" height="3" rx="1" fill="#fff" stroke="#3d5165" stroke-width="1.1"/><rect x="8" y="1" width="6" height="2" fill="none" stroke="#3d5165" stroke-width="0.9"/><path d="M7.5 9 V18 M11 9 V18 M14.5 9 V18" stroke="#5d7085" stroke-width="0.8"/></svg>
<svg style="left:1598.5px;top:290.5px" width="22" height="22" viewBox="0 0 22 22"><rect x="1" y="6" width="16.5" height="5" fill="#d4dde5" stroke="#3d5165" stroke-width="1"/><path d="M11 2.5 H17 M15.5 1 L17 2.5" stroke="#1a82f7" stroke-width="1"/><rect x="13" y="13" width="4" height="8" rx="0.5" fill="#e0eefc" stroke="#1a82f7" stroke-width="1"/><path d="M19.5 14 V19 M18 18 L19.5 19.5 L21 18" fill="none" stroke="#1a82f7" stroke-width="1"/></svg>
<svg style="left:1636.5px;top:292px" width="22" height="22" viewBox="0 0 22 22"><rect x="1.5" y="1.5" width="19" height="9" fill="#d4dde5" stroke="#3d5165" stroke-width="1.1"/><path d="M4.5 4 V10 M7.5 6 V10 M10.5 5 V10 M13.5 6 V10 M16.5 4 V10" stroke="#3d5165" stroke-width="0.9"/><path d="M1.5 14 H20.5 M1.5 12.5 V15.5 M20.5 12.5 V15.5" stroke="#3d5165" stroke-width="0.9"/></svg>
<svg style="left:1598px;top:412px" width="24" height="24" viewBox="0 0 24 24"><path d="M2 2 H18 L11.5 9 V20 L9 19 V9Z" fill="#d4dde5" stroke="#3d5165" stroke-width="1.3" stroke-linejoin="round"/><path d="M13 11 L21 16 L17.5 16.5 L19 20 L17.5 20.7 L16 17.3 L13.5 19.5Z" fill="#cfe4fb" stroke="#1a82f7" stroke-width="0.9"/></svg>
<svg style="left:1635px;top:410px" width="26" height="26" viewBox="0 0 26 26"><path d="M10.5 21 C5 21 1.5 17 1.5 12 C1.5 6 6 2 11.5 2 C17 2 20.5 6 20.5 10 H12 L10.5 21Z" fill="#d4dde5" stroke="#3d5165" stroke-width="1.2"/><circle cx="7" cy="6.5" r="1.3" fill="none" stroke="#3d5165"/><circle cx="12" cy="5" r="1.3" fill="none" stroke="#3d5165"/><circle cx="5" cy="11.5" r="1.3" fill="none" stroke="#3d5165"/><rect x="12" y="12" width="12" height="12" rx="1.5" fill="#4aa3ff" stroke="#1a82f7" stroke-width="1"/><rect x="14.5" y="14.5" width="8" height="8" fill="#cfe4fb"/><path d="M14.5 22.5 V18 H19 V14.5" fill="none" stroke="#1a82f7" stroke-width="1.1"/></svg>
<div class="a" style="left:1587px;top:489px;width:287px;height:49px;background:#f7f8fa;border:1px solid #d3d9e2;border-radius:2px"></div>
<svg style="left:1593px;top:497px" width="30" height="30" viewBox="0 0 30 30"><path d="M4 8 L16 4 L26 8 V22 L14 26 L4 22Z" fill="#e3e6ea" stroke="#d2d6dc" stroke-width="1"/><path d="M4 8 L14 12 L26 8 M14 12 V26 M8 6 V20 L18 24 M8 20 L22 16" fill="none" stroke="#d5d9de" stroke-width="0.8"/></svg>
<div class="t" style="left:1629px;top:508px;font-size:12px;color:#a8adb4">*多种构件*</div>
<svg style="left:1862px;top:509px" width="9" height="6" viewBox="0 0 9 6"><path d="M1 1 L4.5 4.5 L8 1" fill="none" stroke="#5a6270" stroke-width="1.1"/></svg>
<div class="a" style="left:1877px;top:489px;width:24px;height:23px;background:#f7f8fa;border:1px solid #d3d9e2;border-radius:2px"></div>
<svg style="left:1882px;top:493px" width="14" height="14" viewBox="0 0 14 14"><path d="M7 1.5 V12.5 M1.5 7 H12.5" stroke="#7a7d82" stroke-width="1.3"/></svg>
<div class="a" style="left:1877px;top:515px;width:24px;height:23px;background:#f7f8fa;border:1px solid #d3d9e2;border-radius:2px"></div>
<svg style="left:1882px;top:520px" width="14" height="14" viewBox="0 0 14 14"><path d="M3 4 H12 M2 7 H12 M2 10 H11" stroke="#7a7d82" stroke-width="1"/><path d="M4.5 2.5 L2.5 4 L4.5 5.5 M9.5 8.5 L11.5 10 L9.5 11.5" fill="none" stroke="#7a7d82" stroke-width="1"/></svg>
<svg style="left:1590px;top:557px" width="9" height="6" viewBox="0 0 9 6"><path d="M1 1 L4.5 4.5 L8 1" fill="none" stroke="#4a5563" stroke-width="1.3"/></svg>
<div class="t" style="left:1606px;top:555px;font-size:12px;color:#5f6875">楼层信息</div>
<div class="t" style="left:1586px;top:583px;font-size:12px;color:#1a1a1a">所属楼层</div>
<div class="a" style="left:1670px;top:577px;width:232px;height:23px;background:#fff;border:1px solid #cfd6e0;border-radius:2px"></div>
<div class="t" style="left:1673px;top:582px;font-size:13.5px;color:#111">1F</div>
<svg style="left:1888px;top:586px" width="9" height="6" viewBox="0 0 9 6"><path d="M1 1 L4.5 4.5 L8 1" fill="none" stroke="#333" stroke-width="1.3"/></svg>
<svg style="left:1590px;top:619px" width="9" height="6" viewBox="0 0 9 6"><path d="M1 1 L4.5 4.5 L8 1" fill="none" stroke="#4a5563" stroke-width="1.3"/></svg>
<div class="t" style="left:1606px;top:617px;font-size:12px;color:#5f6875">基本属性</div>
<div class="t" style="left:1586px;top:645px;font-size:12px;color:#1a1a1a">关联平面</div>
<div class="a" style="left:1670px;top:639px;width:232px;height:23px;background:#fff;border:1px solid #cfd6e0;border-radius:2px"></div>
<div class="t" style="left:1673px;top:644px;font-size:13.5px;color:#111">1F</div>
<svg style="left:1888px;top:648px" width="9" height="6" viewBox="0 0 9 6"><path d="M1 1 L4.5 4.5 L8 1" fill="none" stroke="#333" stroke-width="1.3"/></svg>
<svg style="left:1590px;top:681px" width="9" height="6" viewBox="0 0 9 6"><path d="M1 1 L4.5 4.5 L8 1" fill="none" stroke="#4a5563" stroke-width="1.3"/></svg>
<div class="t" style="left:1606px;top:679px;font-size:12px;color:#5f6875">定位信息</div>
<div class="t" style="left:1586px;top:707px;font-size:12px;color:#1a1a1a">底部偏移</div>
<div class="a" style="left:1670px;top:701px;width:232px;height:23px;background:#fff;border:1px solid #cfd6e0;border-radius:2px"></div>
<div class="t" style="left:1673px;top:706px;font-size:13.5px;color:#111">0</div><!-- status bar -->
<div class="a" style="left:0;top:1055px;width:1917px;height:25px;background:#eceff2;border-top:1px solid #d6dbe3"></div>
<div class="a" style="left:108px;top:1056px;width:1px;height:24px;background:#d3d8e0"></div>
<svg style="left:17px;top:1060px" width="16" height="16" viewBox="0 0 16 16"><rect x="0.8" y="0.8" width="6" height="6" fill="#d4dde5" stroke="#2e4a63" stroke-width="1.4"/><rect x="9" y="0.8" width="6" height="6" fill="#d4dde5" stroke="#2e4a63" stroke-width="1.4"/><rect x="9" y="9" width="6" height="6" fill="#d4dde5" stroke="#2e4a63" stroke-width="1.4"/><rect x="0.8" y="9" width="6" height="6" fill="none" stroke="#2e4a63" stroke-width="1.4" stroke-dasharray="1.5 3"/></svg>
<svg style="left:49px;top:1060px" width="16" height="16" viewBox="0 0 16 16"><rect x="0.8" y="0.8" width="6" height="6" fill="none" stroke="#a9b9c8" stroke-width="1.3"/><rect x="9" y="0.8" width="6" height="6" fill="none" stroke="#a9b9c8" stroke-width="1.3"/><rect x="9" y="9" width="6" height="6" fill="none" stroke="#a9b9c8" stroke-width="1.3"/><rect x="0.8" y="9" width="6" height="6" fill="#d4dde5" stroke="#2e4a63" stroke-width="1.4"/></svg>
<svg style="left:81px;top:1060px" width="16" height="16" viewBox="0 0 16 16"><rect x="0.8" y="0.8" width="6" height="6" fill="#d4dde5" stroke="#2e4a63" stroke-width="1.4"/><rect x="9" y="0.8" width="6" height="6" fill="#d4dde5" stroke="#2e4a63" stroke-width="1.4"/><rect x="0.8" y="9" width="6" height="6" fill="#d4dde5" stroke="#2e4a63" stroke-width="1.4"/><path d="M9.5 10 A3 3 0 1 1 10.5 14.8" fill="none" stroke="#1a82f7" stroke-width="1.4"/><path d="M9 8.5 V11 H11.5" fill="none" stroke="#1a82f7" stroke-width="1.3"/></svg>
<div class="a" style="left:1716px;top:1056px;width:1px;height:24px;background:#d3d8e0"></div>
<div class="a" style="left:1787px;top:1056px;width:1px;height:24px;background:#d3d8e0"></div>
<svg style="left:1729px;top:1061px" width="16" height="15" viewBox="0 0 16 15"><rect x="0.5" y="0.5" width="5" height="3" fill="#2e4a63"/><rect x="0.5" y="6" width="5" height="3" fill="#2e4a63"/><rect x="0.5" y="11.5" width="5" height="3" fill="#2e4a63"/><path d="M7.5 0 V15" stroke="#2e4a63"/><path d="M9.5 2 H15 M9.5 7.5 H15 M9.5 13 H15" stroke="#2e4a63" stroke-width="0.9"/></svg>
<svg style="left:1761px;top:1060px" width="16" height="16" viewBox="0 0 16 16"><path d="M1.5 0.5 V14.5 H15 M1.5 6.5 H7.5 V14.5" fill="#fff" stroke="#2e4a63" stroke-width="1.2"/><rect x="2" y="7" width="5" height="7" fill="#fff"/></svg>
<svg style="left:1801px;top:1060px" width="16" height="16" viewBox="0 0 16 16"><circle cx="8" cy="8" r="6.8" fill="none" stroke="#3d5165" stroke-width="1.1"/><path d="M5 12 L8 4 L11 12 M6 9.5 H10" fill="none" stroke="#3d5165" stroke-width="1.1"/></svg>
<svg style="left:1833px;top:1060px" width="16" height="16" viewBox="0 0 16 16"><rect x="0.8" y="1" width="14" height="14" fill="#d4dde5" stroke="#2e4a63" stroke-width="1.1"/><rect x="0.8" y="1" width="14" height="2.5" fill="#2e4a63"/><path d="M9.5 15 C9.5 11 12.5 10.5 13 12.5 V15" fill="none" stroke="#1a82f7" stroke-width="1.3"/></svg>
<svg style="left:1865px;top:1060px" width="16" height="16" viewBox="0 0 16 16"><path d="M2 3.5 L4.5 1 H15 V12.5 L12.5 15 H2Z" fill="#9c9c9c" stroke="#3f3f3f" stroke-width="1"/><path d="M2 3.5 H12.5 V15 M12.5 3.5 L15 1" fill="none" stroke="#5a5a5a" stroke-width="0.8"/></svg>
<svg style="left:1897px;top:1060px" width="16" height="16" viewBox="0 0 16 16"><path d="M0.7 3.5 V0.7 H3.5 M12.5 0.7 H15.3 V3.5 M15.3 12.5 V15.3 H12.5 M3.5 15.3 H0.7 V12.5" fill="none" stroke="#2e4a63" stroke-width="1.1"/><circle cx="7.5" cy="7.5" r="4.6" fill="#d4dde5" stroke="#2e4a63" stroke-width="1.2"/><path d="M7.5 5.3 V9.7 M5.3 7.5 H9.7 M11 11 L14 14" stroke="#2e4a63" stroke-width="1.2"/></svg>
</body></html>
